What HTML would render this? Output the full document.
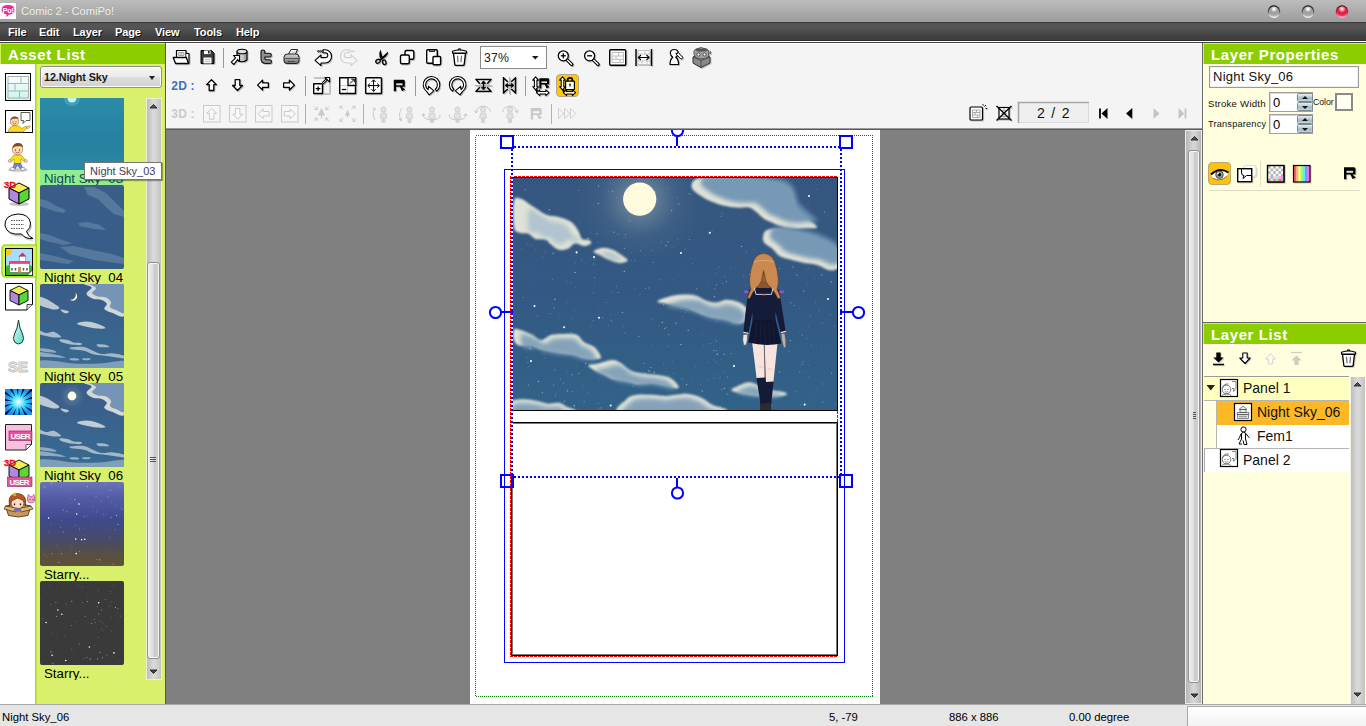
<!DOCTYPE html>
<html lang="en">
<head>
<meta charset="utf-8">
<title>Comic 2 - ComiPo!</title>
<style>
*{box-sizing:border-box;margin:0;padding:0}
html,body{width:1366px;height:726px;overflow:hidden;background:#f4f4f4;font-family:"Liberation Sans","DejaVu Sans",sans-serif;font-size:12px;color:#000}
.a{position:absolute}
#root{position:relative;width:1366px;height:726px;overflow:hidden;background:#f4f4f4}
#title{left:0;top:0;width:1366px;height:22px;background:linear-gradient(#bcbcbc 0,#b0b0b0 40%,#9b9b9b 100%)}
#title .txt{left:21px;top:5px;font-size:11.2px;color:#f4f2ec;text-shadow:0 0 1px #909090;letter-spacing:-.05px}
#menu{left:0;top:22px;width:1366px;height:19px;background:linear-gradient(#525252 0,#555 25%,#404040 80%,#3e3e3e 100%);border-top:1px solid #3c3c3c;border-bottom:1px solid #2c2c2c}
#menu span{position:absolute;top:3px;color:#fff;font-weight:bold;font-size:11px;letter-spacing:-.1px;text-shadow:1px 1px 0 #111}
#menuline{left:0;top:41px;width:1366px;height:2px;background:#fff;border-bottom:1px solid #444}
.ghead{border-top:1px solid #d2f05a;border-left:1px solid #d2f05a;background:#8ccd00;color:#fff;font-weight:bold;font-size:15px;height:21px;line-height:20px;padding-top:1px;letter-spacing:.6px}
/* left */
#left{left:0;top:43px;width:165px;height:661px;background:#d9f06c}
#lefthead{left:0;top:0;width:165px}
#iconcol{left:0;top:21px;width:35px;height:640px;background:#fff}
#lborder{left:165px;top:43px;width:1px;height:661px;background:#555}
.th{left:40px;width:84px;height:84px;border-radius:2px;overflow:hidden}
.th svg{display:block}
.lab{left:40px;width:84px;height:15px;overflow:hidden;font-size:13.3px;line-height:18px;padding-left:4px;white-space:nowrap;letter-spacing:0}
/* toolbar */
#tool{left:166px;top:43px;width:1036px;height:85px;background:#f4f4f4}
#toolline{left:166px;top:128px;width:1036px;height:2px;background:#5a5a5a;border-top:1px solid #9a9a9a}
/* canvas */
#canvas{left:166px;top:130px;width:1019px;height:574px;background:#808080}
#page{left:470px;top:130px;width:410px;height:574px;background:#fff}
#vscroll{left:1185px;top:130px;width:17px;height:574px;border:1px solid #ececec;border-right:0;background:linear-gradient(90deg,#b6b6b6,#d6d6d6 45%,#d2d2d2 60%,#b0b0b0);box-shadow:inset -1px 0 0 #ededed}
#rsep{left:1202px;top:43px;width:1px;height:661px;background:#6b6b6b}
/* right */
#right{left:1203px;top:43px;width:163px;height:661px;background:#ffffe0}
.sm{font-size:10.5px;color:#111;letter-spacing:.2px;white-space:nowrap}
.spin{width:44px;height:20px;border:1px solid #a0a0a0;background:#fff;box-shadow:inset 1px 1px 0 #d8d8d8}
.spin span{position:absolute;left:3px;top:1px;font-size:13px;line-height:17px}
.spin i{position:absolute;left:27px;width:16px;height:9px;border:1px solid #7a8a96;border-radius:1.5px;background:linear-gradient(#e8eef2,#b4c4cc 50%,#9cb0ba 52%,#c8d4da)}
.spin i.u{top:0}.spin i.d{top:9px}
.spin i:after{content:"";position:absolute;left:4px;top:2px;border:3px solid transparent}
.spin i.u:after{border-bottom:3.5px solid #111;border-top:0}
.spin i.d:after{border-top:3.5px solid #111;border-bottom:0;top:2.5px}
.tl{font-size:14px;line-height:17px;color:#111;white-space:nowrap}
/* status */
#status{left:0;top:704px;width:1366px;height:22px;background:#e6e6e6;border-top:1px solid #a8a8a8;font-size:11.3px}
#status span{position:absolute;top:6px}
</style>
</head>
<body>
<div id="root">
<div id="title" class="a"><svg class="a" style="left:0;top:0" width="1366" height="22" viewBox="0 0 1366 22">
<defs>
<radialGradient id="ballg" cx=".5" cy=".25" r=".75"><stop offset="0" stop-color="#fff"/><stop offset=".16" stop-color="#ececec"/><stop offset=".42" stop-color="#9e9e9e"/><stop offset=".75" stop-color="#a4a4a4"/><stop offset="1" stop-color="#c0c0c0"/></radialGradient>
<radialGradient id="ballr" cx=".5" cy=".25" r=".75"><stop offset="0" stop-color="#fff"/><stop offset=".2" stop-color="#f8a0b0"/><stop offset=".5" stop-color="#d81840"/><stop offset=".85" stop-color="#f03860"/><stop offset="1" stop-color="#f890a8"/></radialGradient>
<linearGradient id="rim" x1="0" y1="0" x2="0" y2="1"><stop offset="0" stop-color="#101010"/><stop offset=".5" stop-color="#5a5a5a"/><stop offset=".8" stop-color="#d0d0d0"/><stop offset="1" stop-color="#ffffff"/></linearGradient>
<linearGradient id="rimr" x1="0" y1="0" x2="0" y2="1"><stop offset="0" stop-color="#400010"/><stop offset=".55" stop-color="#c02040"/><stop offset="1" stop-color="#f8c0c8"/></linearGradient>
</defs>
<rect x="0" y="3" width="16" height="16" fill="#fff"/>
<path d="M8,5 q6.500,0 6.500,4.800 q0,4.700 -5.500,4.800 q-1,2 -3.500,2.400 q1.200,-1.200 1,-2.700 q-5,-.8 -5,-4.500 q0,-4.800 6.500,-4.800Z" fill="#ee2a9a"/>
<text x="2.600" y="12.800" font-family="Liberation Sans,sans-serif" font-weight="bold" font-size="7.500" fill="#fff" letter-spacing="-.4">Po!</text>
<circle cx="1274" cy="11.600" r="6.300" fill="url(#rim)"/><circle cx="1274" cy="11.600" r="5.100" fill="url(#ballg)"/>
<circle cx="1308" cy="11.600" r="6.300" fill="url(#rim)"/><circle cx="1308" cy="11.600" r="5.100" fill="url(#ballg)"/>
<circle cx="1342" cy="11.600" r="6.300" fill="url(#rimr)"/><circle cx="1342" cy="11.600" r="5.300" fill="url(#ballr)"/>
</svg>
<span class="a txt">Comic 2 - ComiPo!</span></div>
<div id="menu" class="a"><span style="left:8px">File</span><span style="left:39px">Edit</span><span style="left:73px">Layer</span><span style="left:115px">Page</span><span style="left:155px">View</span><span style="left:194px">Tools</span><span style="left:236px">Help</span></div>
<div id="menuline" class="a"></div>

<div id="left" class="a">
  <div id="lefthead" class="a ghead"><span style="padding-left:7px">Asset List</span></div>
  <div id="iconcol" class="a"></div>
<svg width="0" height="0" style="position:absolute"><defs>
<filter id="tb" x="-10%" y="-10%" width="120%" height="120%"><feGaussianBlur stdDeviation=".55"/></filter>
<filter id="tb2" x="-50%" y="-50%" width="200%" height="200%"><feGaussianBlur stdDeviation="2.5"/></filter>
<linearGradient id="tsky" x1="0" y1="0" x2="0" y2="1"><stop offset="0" stop-color="#36588a"/><stop offset="1" stop-color="#35698f"/></linearGradient>
<g id="tclouds" filter="url(#tb)"><path d="M44.0,-1.0C38.4,-0.3 51.2,1.6 51.6,3.4C52.0,5.2 46.3,7.9 46.5,9.8C46.7,11.7 50.4,13.8 52.9,14.8C55.4,15.8 59.4,15.1 61.7,16.0C64.0,16.9 66.4,18.5 66.8,20.0C67.2,21.5 63.4,23.5 64.3,25.0C65.2,26.5 68.5,27.9 71.9,28.8C75.4,29.8 82.8,35.7 85.0,30.7C87.2,25.7 91.8,4.3 85.0,-1.0C78.2,-6.3 49.6,-1.7 44.0,-1.0Z" fill="#d0d8d8"/><path d="M50.0,-1.0C45.2,-0.2 55.7,2.3 56.0,4.0C56.3,5.7 51.7,7.6 52.0,9.0C52.3,10.4 55.7,11.8 58.0,12.5C60.3,13.2 63.8,12.6 66.0,13.5C68.2,14.4 70.3,16.4 71.0,18.0C71.7,19.6 69.2,21.7 70.0,23.0C70.8,24.3 73.5,25.2 76.0,26.0C78.5,26.8 83.5,32.0 85.0,27.5C86.5,23.0 90.8,3.8 85.0,-1.0C79.2,-5.8 54.8,-1.8 50.0,-1.0Z" fill="#7594b6"/><path d="M-1.0,12.9C0.2,12.0 3.8,13.9 6.0,14.8C8.2,15.8 10.1,17.1 12.3,18.6C14.5,20.1 18.9,22.5 19.3,23.7C19.7,24.9 16.6,25.5 14.8,25.6C13.0,25.7 11.1,25.2 8.5,24.3C5.9,23.4 0.6,22.4 -1.0,20.5C-2.6,18.6 -2.2,13.8 -1.0,12.9Z" fill="#b9c8d2"/><path d="M21.2,25.6C22.4,25.6 28.0,26.9 28.8,27.5C29.6,28.1 27.4,29.4 26.2,29.4C25.0,29.4 22.6,28.1 21.8,27.5C21.0,26.9 20.0,25.6 21.2,25.6Z" fill="#b9c8d2"/><path d="M37.6,38.9C38.9,38.4 43.3,37.5 46.5,37.6C49.7,37.7 53.5,38.4 56.7,39.5C59.9,40.6 65.5,43.1 65.5,44.0C65.5,44.9 59.9,44.8 56.7,44.6C53.5,44.4 49.5,43.3 46.5,42.7C43.5,42.1 40.4,41.4 38.9,40.8C37.4,40.2 36.3,39.4 37.6,38.9Z" fill="#c0cdd4"/><path d="M-1.0,46.5C0.2,46.3 3.6,48.8 6.0,49.0C8.4,49.2 11.1,47.1 13.6,47.8C16.1,48.4 21.0,51.9 21.2,52.9C21.4,53.9 17.1,53.6 14.8,53.5C12.5,53.4 9.8,52.7 7.2,52.2C4.6,51.7 0.4,51.2 -1.0,50.3C-2.4,49.3 -2.2,46.7 -1.0,46.5Z" fill="#a9bccb"/><path d="M19.9,55.4C20.9,55.1 25.2,55.5 27.5,56.0C29.8,56.5 31.5,58.1 33.8,58.6C36.1,59.1 40.3,58.8 41.4,59.2C42.5,59.6 41.9,60.9 40.2,61.1C38.5,61.3 34.5,61.0 31.3,60.5C28.1,60.0 23.1,58.8 21.2,57.9C19.3,57.0 18.8,55.7 19.9,55.4Z" fill="#a9bccb"/><path d="M30.0,63.6C31.9,63.2 40.2,62.5 44.0,63.0C47.8,63.5 49.9,65.6 52.9,66.8C55.9,68.0 58.5,69.6 61.7,70.0C64.9,70.4 68.0,69.0 71.9,69.3C75.8,69.6 82.8,71.1 85.0,71.9C87.2,72.8 88.0,74.4 85.0,74.4C82.0,74.4 72.0,72.5 66.8,71.9C61.6,71.3 57.9,71.4 54.1,70.6C50.3,69.8 47.6,67.6 44.0,66.8C40.4,66.0 34.9,66.0 32.6,65.5C30.3,65.0 28.1,64.0 30.0,63.6Z" fill="#a2b8c8"/><path d="M56.7,60.5C57.6,60.1 62.2,60.1 64.3,60.5C66.4,60.9 70.1,62.6 69.3,63.0C68.5,63.4 61.3,63.4 59.2,63.0C57.1,62.6 55.9,60.9 56.7,60.5Z" fill="#a2b8c8"/><path d="M-1.0,64.3C0.6,64.0 5.7,64.4 8.5,64.9C11.3,65.4 15.3,66.8 16.1,67.4C17.0,68.0 16.4,68.8 13.6,68.7C10.8,68.6 1.4,67.5 -1.0,66.8C-3.4,66.1 -2.6,64.6 -1.0,64.3Z" fill="#8faabf"/><path d="M-1.0,68.0C0.6,67.6 4.8,68.6 8.5,69.3C12.2,70.0 18.4,71.2 21.2,71.9C23.9,72.7 27.1,73.6 25.0,73.8C22.9,74.0 12.8,73.4 8.5,73.1C4.2,72.8 0.6,72.8 -1.0,71.9C-2.6,71.1 -2.6,68.4 -1.0,68.0Z" fill="#8faabf"/><path d="M-1.0,76.9C1.6,75.6 9.0,76.5 14.8,76.9C20.6,77.3 26.4,79.1 33.8,79.5C41.2,79.9 50.7,79.9 59.2,79.5C67.7,79.1 80.7,76.0 85.0,76.9C89.3,77.8 99.3,83.7 85.0,85.0C70.7,86.3 13.3,86.3 -1.0,85.0C-15.3,83.7 -3.6,78.2 -1.0,76.9Z" fill="#7f9eb8"/><path d="M30.0,74.4C31.1,74.1 36.1,74.1 37.6,74.4C39.1,74.7 39.9,76.0 38.9,76.3C37.9,76.6 32.8,76.6 31.3,76.3C29.8,76.0 28.9,74.7 30.0,74.4Z" fill="#9ab2c4"/><path d="M42.7,74.4C43.9,74.2 49.2,74.2 50.3,74.4C51.3,74.7 50.2,75.7 49.0,75.9C47.8,76.2 44.3,76.2 43.3,75.9C42.2,75.7 41.5,74.7 42.7,74.4Z" fill="#9ab2c4"/></g>
</defs></svg>
<div class="a" id="ddl" style="left:40px;top:23px;width:122px;height:22px;border:1px solid #8e8e8e;border-radius:3px;background:linear-gradient(#f6f6f6,#ececec 45%,#dcdcdc 55%,#d2d2d2);box-shadow:inset 0 0 0 1px #fbfbfb"><span class="a" style="left:3px;top:4px;font-size:10.8px;font-weight:bold;color:#1a1a1a;letter-spacing:-.1px">12.Night Sky</span><span class="a" style="left:108px;top:9px;width:0;height:0;border:3px solid transparent;border-top:4px solid #222;border-bottom:0"></span></div>
<!-- thumbs: panel-local y = page y - 43 -->
<div class="a th" style="top:55px;height:72px;border-radius:0 0 2px 2px;background:linear-gradient(#2a8caa,#26809f 60%,#2a88a6)"><svg width="84" height="72"><circle cx="32" cy="0" r="4.5" fill="#d8fbf4"/><circle cx="32" cy="0" r="8" fill="#8fe0e0" opacity=".25"/></svg></div>
<div class="a lab" style="top:127px;background:#90ee90;color:#0c4858">Night Sky_03</div>
<div class="a th" style="top:142px;background:linear-gradient(#3b5d88,#355e88)"><svg width="84" height="84"><g filter="url(#tb)" fill="#56789d"><path d="M44,2 l10,0 l12,6 l10,10 l8,8 l0,6 l-10,-3 l-8,-7 l-8,-8 l-10,-4Z"/><path d="M0,14 l8,2 l8,5 l10,4 l-2,3 l-10,-2 l-14,-5Z"/><path d="M38,38 l10,-1 l12,3 l6,5 l-12,-1 l-14,-3Z"/><path d="M0,48 l10,2 l12,5 l10,3 l-8,2 l-14,-3 l-10,-3Z"/><path d="M20,62 l14,-1 l18,4 l20,4 l12,4 l0,6 l-30,-4 l-24,-6Z"/><path d="M0,68 l14,3 l20,5 l-6,3 l-28,-4Z"/></g></svg></div>
<div class="a lab" style="top:226px">Night Sky_04</div>
<div class="a th" style="top:241px;background:linear-gradient(#3a5c88,#386a92)"><svg width="84" height="84"><use href="#tclouds"/><path d="M35.600,9 a4.400,4.400 0 1 1 -5.800,6.800 a5.400,5.400 0 0 0 5.800,-6.800Z" fill="#f8f2cc"/></svg></div>
<div class="a lab" style="top:325px">Night Sky_05</div>
<div class="a th" style="top:340px;background:linear-gradient(#3a5c88,#386a92)"><svg width="84" height="84"><circle cx="32" cy="13" r="9" fill="#8aa2b8" opacity=".3" filter="url(#tb2)"/><use href="#tclouds"/><circle cx="32" cy="13" r="4.4" fill="#fffbe2"/></svg></div>
<div class="a lab" style="top:424px">Night Sky_06</div>
<div class="a th" style="top:439px;background:linear-gradient(#6a74b8 0,#545ca6 18%,#3f4a8c 45%,#474a6a 68%,#57503e 88%,#5e5238)"><svg width="84" height="84"><circle cx="20.5" cy="45.6" r="0.4" fill="#e8ecff" opacity="0.85"/><circle cx="39.9" cy="48.6" r="0.3" fill="#e8ecff" opacity="0.85"/><circle cx="39.5" cy="46.2" r="0.35" fill="#e8ecff" opacity="0.90"/><circle cx="39.6" cy="69.6" r="0.5" fill="#e8ecff" opacity="0.57"/><circle cx="71.6" cy="20.0" r="0.35" fill="#e8ecff" opacity="0.83"/><circle cx="43.9" cy="61.8" r="0.3" fill="#e8ecff" opacity="0.44"/><circle cx="79.5" cy="4.5" r="0.3" fill="#e8ecff" opacity="0.80"/><circle cx="23.1" cy="49.8" r="0.5" fill="#e8ecff" opacity="0.74"/><circle cx="76.5" cy="33.4" r="0.5" fill="#e8ecff" opacity="0.88"/><circle cx="12.0" cy="31.0" r="0.3" fill="#e8ecff" opacity="0.42"/><circle cx="18.8" cy="80.2" r="0.5" fill="#e8ecff" opacity="0.78"/><circle cx="71.1" cy="35.5" r="0.5" fill="#e8ecff" opacity="0.67"/><circle cx="44.8" cy="34.4" r="0.35" fill="#e8ecff" opacity="0.85"/><circle cx="56.9" cy="77.2" r="0.4" fill="#e8ecff" opacity="0.90"/><circle cx="56.0" cy="14.4" r="0.4" fill="#e8ecff" opacity="0.88"/><circle cx="75.2" cy="47.7" r="0.35" fill="#e8ecff" opacity="0.70"/><circle cx="82.0" cy="22.9" r="0.3" fill="#e8ecff" opacity="0.38"/><circle cx="71.0" cy="82.2" r="0.3" fill="#e8ecff" opacity="0.54"/><circle cx="6.5" cy="74.6" r="0.3" fill="#e8ecff" opacity="0.51"/><circle cx="64.0" cy="72.6" r="0.3" fill="#e8ecff" opacity="0.68"/><circle cx="63.5" cy="32.0" r="0.4" fill="#e8ecff" opacity="0.65"/><circle cx="76.6" cy="23.9" r="0.35" fill="#e8ecff" opacity="0.90"/><circle cx="26.4" cy="7.3" r="0.3" fill="#e8ecff" opacity="0.87"/><circle cx="80.7" cy="24.9" r="0.4" fill="#e8ecff" opacity="0.44"/><circle cx="4.5" cy="72.2" r="0.4" fill="#e8ecff" opacity="0.55"/><circle cx="12.3" cy="71.7" r="0.5" fill="#e8ecff" opacity="0.60"/><circle cx="43.6" cy="53.8" r="0.3" fill="#e8ecff" opacity="0.69"/><circle cx="78.1" cy="42.6" r="0.5" fill="#e8ecff" opacity="0.70"/><circle cx="59.7" cy="77.8" r="0.5" fill="#e8ecff" opacity="0.89"/><circle cx="43.7" cy="46.0" r="0.3" fill="#e8ecff" opacity="0.78"/><circle cx="82.0" cy="26.8" r="0.5" fill="#e8ecff" opacity="0.69"/><circle cx="52.8" cy="5.9" r="0.4" fill="#e8ecff" opacity="0.61"/><circle cx="56.7" cy="29.9" r="0.4" fill="#e8ecff" opacity="0.76"/><circle cx="2.8" cy="6.0" r="0.3" fill="#e8ecff" opacity="0.88"/><circle cx="21.6" cy="38.4" r="0.4" fill="#e8ecff" opacity="0.45"/><circle cx="16.2" cy="63.2" r="0.4" fill="#e8ecff" opacity="0.52"/><circle cx="31.9" cy="64.3" r="0.3" fill="#e8ecff" opacity="0.88"/><circle cx="57.1" cy="11.8" r="0.35" fill="#e8ecff" opacity="0.71"/><circle cx="23.1" cy="27.9" r="0.5" fill="#e8ecff" opacity="0.71"/><circle cx="9.0" cy="50.3" r="0.4" fill="#e8ecff" opacity="0.72"/><circle cx="19.4" cy="67.4" r="0.35" fill="#e8ecff" opacity="0.39"/><circle cx="61.8" cy="18.9" r="0.5" fill="#e8ecff" opacity="0.50"/><circle cx="65.5" cy="3.8" r="0.35" fill="#e8ecff" opacity="0.52"/><circle cx="69.6" cy="48.1" r="0.4" fill="#e8ecff" opacity="0.54"/><circle cx="68.9" cy="8.0" r="0.4" fill="#e8ecff" opacity="0.67"/><circle cx="35.5" cy="43.5" r="0.4" fill="#e8ecff" opacity="0.61"/><circle cx="53.0" cy="24.8" r="0.5" fill="#e8ecff" opacity="0.37"/><circle cx="34.9" cy="17.4" r="0.5" fill="#e8ecff" opacity="0.87"/><circle cx="73.2" cy="81.9" r="0.5" fill="#e8ecff" opacity="0.66"/><circle cx="81.8" cy="59.8" r="0.3" fill="#e8ecff" opacity="0.76"/><circle cx="69.6" cy="55.4" r="0.4" fill="#e8ecff" opacity="0.65"/><circle cx="74.0" cy="71.6" r="0.4" fill="#e8ecff" opacity="0.42"/><circle cx="21.1" cy="3.9" r="0.35" fill="#e8ecff" opacity="0.84"/><circle cx="74.8" cy="48.3" r="0.3" fill="#e8ecff" opacity="0.61"/><circle cx="10.9" cy="42.3" r="0.35" fill="#e8ecff" opacity="0.71"/><circle cx="44.0" cy="34.9" r="0.3" fill="#e8ecff" opacity="0.54"/><circle cx="21.7" cy="71.7" r="0.5" fill="#e8ecff" opacity="0.80"/><circle cx="6.0" cy="19.1" r="0.3" fill="#e8ecff" opacity="0.64"/><circle cx="68.0" cy="15.0" r="0.4" fill="#e8ecff" opacity="0.86"/><circle cx="67.1" cy="68.5" r="0.3" fill="#e8ecff" opacity="0.62"/><circle cx="47.8" cy="33.8" r="0.4" fill="#e8ecff" opacity="0.49"/><circle cx="51.7" cy="43.6" r="0.3" fill="#e8ecff" opacity="0.61"/><circle cx="64.7" cy="1.1" r="0.3" fill="#e8ecff" opacity="0.78"/><circle cx="4.8" cy="5.1" r="0.5" fill="#e8ecff" opacity="0.89"/><circle cx="71.1" cy="8.1" r="0.5" fill="#e8ecff" opacity="0.52"/><circle cx="26.8" cy="29.8" r="0.5" fill="#e8ecff" opacity="0.67"/><circle cx="30.6" cy="16.7" r="0.4" fill="#e8ecff" opacity="0.59"/><circle cx="11.5" cy="1.3" r="0.5" fill="#e8ecff" opacity="0.79"/><circle cx="47.5" cy="4.5" r="0.5" fill="#e8ecff" opacity="0.68"/><circle cx="65.2" cy="32.2" r="0.3" fill="#e8ecff" opacity="0.69"/><circle cx="36.7" cy="32.0" r=".8" fill="#fff"/><circle cx="41.7" cy="57.8" r=".8" fill="#fff"/><circle cx="35.8" cy="57.1" r=".8" fill="#fff"/><circle cx="38.9" cy="22.1" r=".8" fill="#fff"/><circle cx="44.8" cy="57.2" r=".8" fill="#fff"/><circle cx="8.6" cy="36.1" r=".8" fill="#fff"/><circle cx="36.2" cy="71.6" r=".8" fill="#fff"/></svg></div>
<div class="a lab" style="top:523px">Starry...</div>
<div class="a th" style="top:538px;background:#3a3a3a"><svg width="84" height="84"><circle cx="77.8" cy="31.7" r="0.4" fill="#e0e0e0" opacity="0.42"/><circle cx="57.6" cy="78.0" r="0.5" fill="#e0e0e0" opacity="0.72"/><circle cx="61.2" cy="47.2" r="0.3" fill="#e0e0e0" opacity="0.80"/><circle cx="59.8" cy="39.8" r="0.35" fill="#e0e0e0" opacity="0.78"/><circle cx="4.6" cy="8.5" r="0.3" fill="#e0e0e0" opacity="0.71"/><circle cx="31.8" cy="68.2" r="0.4" fill="#e0e0e0" opacity="0.81"/><circle cx="10.9" cy="70.2" r="0.5" fill="#e0e0e0" opacity="0.81"/><circle cx="79.1" cy="48.5" r="0.3" fill="#e0e0e0" opacity="0.37"/><circle cx="63.9" cy="42.9" r="0.35" fill="#e0e0e0" opacity="0.41"/><circle cx="62.4" cy="77.6" r="0.3" fill="#e0e0e0" opacity="0.65"/><circle cx="72.3" cy="15.8" r="0.3" fill="#e0e0e0" opacity="0.48"/><circle cx="15.7" cy="21.5" r="0.5" fill="#e0e0e0" opacity="0.49"/><circle cx="50.2" cy="78.0" r="0.5" fill="#e0e0e0" opacity="0.88"/><circle cx="31.8" cy="20.3" r="0.5" fill="#e0e0e0" opacity="0.81"/><circle cx="80.3" cy="35.1" r="0.5" fill="#e0e0e0" opacity="0.44"/><circle cx="33.9" cy="73.8" r="0.35" fill="#e0e0e0" opacity="0.40"/><circle cx="62.3" cy="76.2" r="0.5" fill="#e0e0e0" opacity="0.67"/><circle cx="71.4" cy="12.2" r="0.35" fill="#e0e0e0" opacity="0.43"/><circle cx="43.3" cy="77.7" r="0.4" fill="#e0e0e0" opacity="0.72"/><circle cx="71.1" cy="49.8" r="0.4" fill="#e0e0e0" opacity="0.84"/><circle cx="26.2" cy="23.0" r="0.5" fill="#e0e0e0" opacity="0.46"/><circle cx="47.7" cy="20.6" r="0.5" fill="#e0e0e0" opacity="0.78"/><circle cx="12.8" cy="82.3" r="0.5" fill="#e0e0e0" opacity="0.74"/><circle cx="17.9" cy="48.6" r="0.3" fill="#e0e0e0" opacity="0.61"/><circle cx="60.1" cy="71.2" r="0.5" fill="#e0e0e0" opacity="0.78"/><circle cx="73.3" cy="4.8" r="0.35" fill="#e0e0e0" opacity="0.84"/><circle cx="54.2" cy="64.7" r="0.3" fill="#e0e0e0" opacity="0.88"/><circle cx="71.0" cy="20.9" r="0.35" fill="#e0e0e0" opacity="0.78"/><circle cx="12.3" cy="52.0" r="0.3" fill="#e0e0e0" opacity="0.84"/><circle cx="21.9" cy="71.9" r="0.4" fill="#e0e0e0" opacity="0.45"/><circle cx="8.5" cy="66.5" r="0.3" fill="#e0e0e0" opacity="0.40"/><circle cx="69.4" cy="24.9" r="0.4" fill="#e0e0e0" opacity="0.60"/><circle cx="61.2" cy="28.6" r="0.3" fill="#e0e0e0" opacity="0.53"/><circle cx="36.8" cy="40.8" r="0.35" fill="#e0e0e0" opacity="0.70"/><circle cx="61.9" cy="41.2" r="0.35" fill="#e0e0e0" opacity="0.65"/><circle cx="10.8" cy="23.5" r="0.5" fill="#e0e0e0" opacity="0.41"/><circle cx="73.7" cy="75.5" r="0.3" fill="#e0e0e0" opacity="0.64"/><circle cx="58.5" cy="56.6" r="0.4" fill="#e0e0e0" opacity="0.77"/><circle cx="25.2" cy="56.4" r="0.4" fill="#e0e0e0" opacity="0.41"/><circle cx="78.4" cy="28.8" r="0.3" fill="#e0e0e0" opacity="0.72"/><circle cx="42.7" cy="5.9" r="0.4" fill="#e0e0e0" opacity="0.72"/><circle cx="47.4" cy="15.9" r="0.35" fill="#e0e0e0" opacity="0.45"/><circle cx="74.0" cy="54.7" r="0.3" fill="#e0e0e0" opacity="0.41"/><circle cx="46.9" cy="76.5" r="0.5" fill="#e0e0e0" opacity="0.66"/><circle cx="54.1" cy="38.5" r="0.4" fill="#e0e0e0" opacity="0.78"/><circle cx="58.8" cy="9.8" r="0.35" fill="#e0e0e0" opacity="0.76"/><circle cx="45.5" cy="61.7" r="0.4" fill="#e0e0e0" opacity="0.40"/><circle cx="23.2" cy="5.4" r="0.35" fill="#e0e0e0" opacity="0.37"/><circle cx="42.4" cy="21.3" r="0.4" fill="#e0e0e0" opacity="0.83"/><circle cx="78.5" cy="37.8" r="0.3" fill="#e0e0e0" opacity="0.54"/><circle cx="70.4" cy="10.2" r="0.4" fill="#e0e0e0" opacity="0.67"/><circle cx="56.9" cy="47.3" r="0.3" fill="#e0e0e0" opacity="0.45"/><circle cx="16.5" cy="35.2" r="0.5" fill="#e0e0e0" opacity="0.80"/><circle cx="62.4" cy="49.5" r="0.35" fill="#e0e0e0" opacity="0.82"/><circle cx="66.5" cy="45.7" r="0.35" fill="#e0e0e0" opacity="0.66"/><circle cx="17.6" cy="21.5" r="0.4" fill="#e0e0e0" opacity="0.37"/><circle cx="66.9" cy="74.1" r="0.5" fill="#e0e0e0" opacity="0.52"/><circle cx="75.3" cy="26.4" r="0.5" fill="#e0e0e0" opacity="0.89"/><circle cx="57.3" cy="25.6" r="0.5" fill="#e0e0e0" opacity="0.37"/><circle cx="16.6" cy="53.0" r="0.3" fill="#e0e0e0" opacity="0.77"/><circle cx="55.3" cy="41.3" r="0.5" fill="#e0e0e0" opacity="0.46"/><circle cx="65.1" cy="18.4" r="0.5" fill="#e0e0e0" opacity="0.41"/><circle cx="24.2" cy="54.9" r="0.35" fill="#e0e0e0" opacity="0.42"/><circle cx="66.0" cy="52.1" r="0.3" fill="#e0e0e0" opacity="0.36"/><circle cx="51.7" cy="42.5" r="0.5" fill="#e0e0e0" opacity="0.65"/><circle cx="77.2" cy="27.5" r="0.4" fill="#e0e0e0" opacity="0.73"/><circle cx="12.0" cy="71.4" r="0.3" fill="#e0e0e0" opacity="0.74"/><circle cx="61.7" cy="29.2" r="0.35" fill="#e0e0e0" opacity="0.86"/><circle cx="71.6" cy="36.8" r="0.35" fill="#e0e0e0" opacity="0.62"/><circle cx="9.9" cy="4.5" r="0.3" fill="#e0e0e0" opacity="0.81"/><circle cx="58.9" cy="33.1" r="0.5" fill="#e0e0e0" opacity="0.73"/><circle cx="45.1" cy="35.6" r="0.5" fill="#e0e0e0" opacity="0.52"/><circle cx="39.1" cy="63.1" r="0.5" fill="#e0e0e0" opacity="0.59"/><circle cx="38.3" cy="4.1" r="0.4" fill="#e0e0e0" opacity="0.55"/><circle cx="31.4" cy="44.4" r="0.5" fill="#e0e0e0" opacity="0.47"/><circle cx="1.2" cy="18.1" r="0.4" fill="#e0e0e0" opacity="0.43"/><circle cx="38.7" cy="17.0" r="0.35" fill="#e0e0e0" opacity="0.36"/><circle cx="48.9" cy="42.3" r="0.3" fill="#e0e0e0" opacity="0.43"/><circle cx="50.9" cy="37.3" r="0.35" fill="#e0e0e0" opacity="0.38"/><circle cx="2.8" cy="37.7" r="0.5" fill="#e0e0e0" opacity="0.37"/><circle cx="58.7" cy="21.7" r=".8" fill="#fff"/><circle cx="6.1" cy="41.5" r=".8" fill="#fff"/><circle cx="73.9" cy="71.9" r=".8" fill="#fff"/><circle cx="21.8" cy="33.3" r=".8" fill="#fff"/><circle cx="17.9" cy="29.0" r=".8" fill="#fff"/><circle cx="12.1" cy="74.2" r=".8" fill="#fff"/><circle cx="49.4" cy="66.0" r=".8" fill="#fff"/><circle cx="25.7" cy="79.5" r=".8" fill="#fff"/></svg></div>
<div class="a lab" style="top:622px">Starry...</div>
<!-- scrollbar -->
<div class="a" style="left:146px;top:55px;width:16px;height:582px;border:1px solid #ecf2da;background:linear-gradient(90deg,#bdbdbd,#dadada 45%,#d6d6d6 60%,#c2c2c2)">
 <svg class="a" style="left:2px;top:4px" width="9" height="6"><path d="M1,5 L4.500,1.500 L8,5Z" fill="#555" stroke="#222" stroke-width=".9"/></svg>
 <div class="a" style="left:0;top:163px;width:13px;height:397px;border:1px solid #8f8f8f;border-radius:3px;background:linear-gradient(90deg,#ececec,#e0e0e0 45%,#cbcbcb 55%,#d0d0d0);box-shadow:inset 0 0 0 1px #f6f6f6"></div>
 <svg class="a" style="left:3px;top:358px" width="6" height="7"><path d="M0,.5H6M0,2.5H6M0,4.5H6" stroke="#555" stroke-width="1"/></svg>
 <svg class="a" style="left:2px;top:570px" width="9" height="6"><path d="M1,1 L4.500,4.500 L8,1Z" fill="#444" stroke="#222" stroke-width=".9"/></svg>
</div>
<!-- tooltip -->
<div class="a" style="left:84px;top:119px;width:78px;height:18px;background:#fff;border:1px solid #767676;font-size:11px;color:#3c4060;padding:2px 0 0 5px;box-shadow:1px 1px 1px rgba(0,0,0,.35)">Night Sky_03</div>

<svg class="a" style="left:0;top:21px" width="37" height="640" viewBox="0 64 37 640">
<defs>
<linearGradient id="cy" x1="0" y1="0" x2="0" y2="1"><stop offset="0" stop-color="#fff"/><stop offset="1" stop-color="#c8f4ee"/></linearGradient>
<radialGradient id="burst"><stop offset="0" stop-color="#ffffff"/><stop offset=".25" stop-color="#90f4ff"/><stop offset=".6" stop-color="#30c8f8"/><stop offset="1" stop-color="#1c90f0"/></radialGradient>
<linearGradient id="drop" x1="0" y1="0" x2="1" y2="1"><stop offset="0" stop-color="#e0fffa"/><stop offset="1" stop-color="#58d8c8"/></linearGradient>
</defs>
<!-- selected tab -->
<path d="M36.5,245 H6 Q2,245 2,249 V273 Q2,277 6,277 H36.5Z" fill="#d9f06c" stroke="#a4dc20" stroke-width="1.600"/>
<rect x="35" y="64" width="1.5" height="181" fill="#a4dc20"/><rect x="35" y="277" width="1.5" height="427" fill="#a4dc20"/>
<!-- 1 panel layout -->
<rect x="5.5" y="73.5" width="25" height="27" fill="url(#cy)" stroke="#000"/>
<path d="M8,76.5H28.5V98H8Z M8,83.5H28.5 M8,91H28.5 M21,76.5V83.5 M15,83.5V91 M19.5,91V98" fill="none" stroke="#a8b0b0" stroke-width="1"/>
<!-- 2 char w/ speech -->
<rect x="5.500" y="110.500" width="27" height="22" fill="#fff" stroke="#000"/>
<path d="M21,112.500 h9 v8 h-4 l-3,3 l0.500,-3 h-2.500Z" fill="#fff" stroke="#333" stroke-width=".8"/>
<path d="M25,115v.1M27,115v.1M25,117.500v.1M27,117.500v.1" stroke="#777" stroke-width="1"/>
<path d="M8,132 q1,-6 7,-6.500 q5,0 7,3 l4,-2.500 l2,1 l-5,5Z" fill="#f8d820" stroke="#a08000" stroke-width=".5"/>
<circle cx="14.500" cy="121.500" r="4.200" fill="#fbd8b0" stroke="#805030" stroke-width=".5"/>
<path d="M10.300,120.500 q1,-4.500 5,-4 q3,.2 3.500,2.500 l-2,-.5 l-4,.2Z" fill="#7a4a20"/>
<path d="M13,121.500v.8M16,121.500v.8" stroke="#222" stroke-width=".9"/><path d="M13,123.500 q1.500,1.300 3,0" stroke="#a03020" stroke-width=".6" fill="none"/>
<path d="M26,128 l3,-2.500 l1.500,.5 l-2,2.500Z" fill="#fbd8b0" stroke="#805030" stroke-width=".4"/>
<!-- 3 standing char -->
<ellipse cx="18" cy="170" rx="10" ry="1.800" fill="#c8c8c8"/>
<path d="M14,155 l-4.500,5 l1.500,1.500 l3,-2.500 v5 h7 v-5 l3,2.500 l1.500,-1.500 l-4.500,-5Z" fill="#f8e020" stroke="#907000" stroke-width=".5"/>
<path d="M14.500,163.500 l-2,5 h3 l2,-3.500 l2.500,3.500 h3 l-2.500,-5Z" fill="#7088d0" stroke="#304080" stroke-width=".5"/>
<ellipse cx="12.500" cy="169" rx="2.600" ry="1.400" fill="#fff" stroke="#555" stroke-width=".5"/><ellipse cx="23" cy="169" rx="2.600" ry="1.400" fill="#fff" stroke="#555" stroke-width=".5"/>
<circle cx="9.800" cy="161" r="1.500" fill="#fbd8b0" stroke="#805030" stroke-width=".4"/><circle cx="25.800" cy="161" r="1.500" fill="#fbd8b0" stroke="#805030" stroke-width=".4"/>
<circle cx="17.500" cy="149.500" r="5.200" fill="#fbd8b0" stroke="#805030" stroke-width=".5"/>
<path d="M12.300,148.500 q.5,-5.500 6,-5.500 q4.500,.3 4.700,4 l-3,-1 l-5,.5Z" fill="#7a4a20"/>
<path d="M15.500,149.500v1M19.500,149.500v1" stroke="#222" stroke-width="1"/><path d="M15.500,152 q2,1.600 4,0" stroke="#a03020" stroke-width=".7" fill="none"/>
<!-- 4 3D cube -->
<ellipse cx="19" cy="204" rx="10" ry="2" fill="#c4c4c4"/>
<path d="M19,183 l10,5 l-10,5 l-10,-5Z" fill="#f0f050" stroke="#000" stroke-width="1"/>
<path d="M9,188 l10,5 v11 l-10,-5Z" fill="#b088e0" stroke="#000" stroke-width="1"/>
<path d="M29,188 l-10,5 v11 l10,-5Z" fill="#58d838" stroke="#000" stroke-width="1"/>
<text x="4" y="188" font-family="Liberation Sans,sans-serif" font-weight="bold" font-size="9.500" fill="#e81010" stroke="#e81010" stroke-width=".3">3D</text>
<!-- 5 speech bubble -->
<path d="M18,215 q11,0 12.500,9 q.5,5 -4,8.500 q1.500,5 6.500,7 q-8,.5 -11.500,-4.500 q-14,1.500 -16.500,-8 q-1,-11 13,-12Z" fill="#c8c8c8" transform="translate(1.200,1.200)"/>
<path d="M18,214 q11,0 12.500,9 q.5,5 -4,8.500 q1.500,5 6.500,7 q-8,.5 -11.500,-4.500 q-14,1.500 -16.500,-8 q-1,-11 13,-12Z" fill="#fff" stroke="#000" stroke-width="1"/>
<path d="M11,220.500h13M11,224.500h13M11,228.500h13" stroke="#555" stroke-width="1.200" stroke-dasharray="1.500 1"/>
<!-- 6 background -->
<rect x="5.500" y="248.500" width="27" height="27" fill="#a8dcf8" stroke="#000"/>
<path d="M6,249 h6.500 q0,6.500 -6.500,6.500Z" fill="#f8c820"/>
<path d="M6,266 q8,-3 13,-1 q8,-2 13,1 v9 h-26Z" fill="#38b828"/>
<path d="M22.500,252.500 l4,4 h-8Z" fill="#e02868"/><rect x="19.500" y="256.500" width="6" height="5" fill="#fff" stroke="#555" stroke-width=".4"/>
<rect x="9" y="261" width="21" height="2.500" fill="#f04080"/>
<rect x="9.500" y="263.500" width="20" height="9" fill="#fff" stroke="#444" stroke-width=".5"/>
<path d="M12,268v2.500M15.500,268v2.500M23.500,268v2.500M27,268v2.500" stroke="#555" stroke-width="1.500"/><rect x="18" y="267" width="3" height="5.500" fill="#c89860"/>
<path d="M27,275.500 l5.500,-5.500 v5.500Z" fill="#fff" stroke="#000" stroke-width=".6"/>
<!-- 7 cube page -->
<path d="M5.500,283.500 h27 v21 l-5.500,5.500 h-21.500Z" fill="#fff" stroke="#000"/>
<path d="M27,310 v-5.500 h5.500" fill="#ddd" stroke="#000" stroke-width=".7"/>
<path d="M19,286 l9,4.500 l-9,4.500 l-9,-4.500Z" fill="#f0f050" stroke="#000" stroke-width=".9"/>
<path d="M10,290.500 l9,4.500 v10 l-9,-4.500Z" fill="#b088e0" stroke="#000" stroke-width=".9"/>
<path d="M28,290.500 l-9,4.500 v10 l9,-4.500Z" fill="#58d838" stroke="#000" stroke-width=".9"/>
<!-- 8 drop -->
<path d="M18.500,320 q1,9 4,14 q2.500,5 -0.500,8.500 q-3.500,3 -7,0 q-3,-3.500 -.5,-8.500 q3,-5 4,-14Z" fill="url(#drop)" stroke="#1a3838" stroke-width="1"/>
<!-- 9 SE -->
<text x="8" y="372" font-family="Liberation Sans,sans-serif" font-weight="bold" font-size="15" fill="#f2f2f2" stroke="#c4c4c4" stroke-width="1">SE</text>
<!-- 10 burst -->
<rect x="5" y="389" width="27" height="26" fill="url(#burst)"/>
<clipPath id="bc"><rect x="5" y="389" width="27" height="26"/></clipPath><path clip-path="url(#bc)" d="M25.3,403.0 L44.4,403.7 L43.8,408.1Z M24.2,405.9 L41.1,414.8 L38.7,418.4Z M20.8,406.0 L33.4,423.3 L29.5,425.5Z M18.9,406.7 L22.6,427.7 L18.2,428.0Z M16.1,408.1 L11.1,426.9 L7.0,425.3Z M13.9,406.3 L1.0,421.2 L-2.0,418.0Z M12.6,403.8 L-5.6,411.7 L-6.9,407.5Z M13.3,401.2 L-7.4,400.3 L-6.8,395.9Z M13.5,398.6 L-4.1,389.2 L-1.7,385.6Z M15.5,396.8 L3.6,380.7 L7.5,378.5Z M18.1,396.1 L14.4,376.3 L18.8,376.0Z M20.3,397.4 L25.9,377.1 L30.0,378.7Z M22.6,398.2 L36.0,382.8 L39.0,386.0Z M23.7,400.4 L42.6,392.3 L43.9,396.5Z " fill="#031040"/>
<!-- 11 USER page -->
<path d="M5.500,424.500 h26 v20 l-5.500,5.500 h-20.500Z" fill="#f8c0e0" stroke="#222"/>
<path d="M26,450 v-5.500 h5.500Z" fill="#fff" stroke="#222" stroke-width=".7"/>
<rect x="9" y="431" width="23" height="9.500" fill="#e85098" stroke="#902058" stroke-width=".6"/>
<text x="10.500" y="439" font-family="Liberation Sans,sans-serif" font-weight="bold" font-size="8" fill="#fff" textLength="20">USER</text>
<!-- 12 3D USER -->
<path d="M19,460 l10,5 l-10,5 l-10,-5Z" fill="#f0f050" stroke="#000" stroke-width=".9"/>
<path d="M9,465 l10,5 v11 l-10,-5Z" fill="#b088e0" stroke="#000" stroke-width=".9"/>
<path d="M29,465 l-10,5 v11 l10,-5Z" fill="#58d838" stroke="#000" stroke-width=".9"/>
<text x="4" y="466" font-family="Liberation Sans,sans-serif" font-weight="bold" font-size="9.500" fill="#e81010" stroke="#e81010" stroke-width=".3">3D</text>
<rect x="7.500" y="477" width="24.500" height="9.500" fill="#e85098" stroke="#902058" stroke-width=".6"/>
<text x="9.500" y="485" font-family="Liberation Sans,sans-serif" font-weight="bold" font-size="8" fill="#fff" textLength="20">USER</text>
<!-- 13 girl in box -->
<path d="M5.500,506 l13,-2.500 l12.500,2.500 l-3,9.500 l-9.500,1.500 l-10,-1.500Z" fill="#c89858" stroke="#402808" stroke-width=".8"/>
<circle cx="17.500" cy="503" r="6.300" fill="#fbdcc0" stroke="#603010" stroke-width=".5"/>
<path d="M9.500,506 q-2.500,-12.500 8,-12.500 q10,.5 8,12.500 l-2,-5.500 l-6,-2.500 l-6,3Z" fill="#b85820" stroke="#502008" stroke-width=".6"/>
<path d="M14.500,503.500v1.800M20.500,503.500v1.800" stroke="#302010" stroke-width="1.400"/>
<path d="M11.500,495.500 l4,-2.500 l1,3Z" fill="#f8d020" stroke="#907000" stroke-width=".4"/>
<path d="M5.500,506 l-1.500,3 l11.500,3 l3,-3.500Z M31,506 l2,3 l-11.500,3 l-3,-3.500Z" fill="#e0b878" stroke="#402808" stroke-width=".7"/>
<path d="M13.500,509.500 q4,-2.500 8,0 l-1,2 h-6Z" fill="#7068c0"/>
<path d="M27.500,498 l.8,-3.500 l1.800,2.200 h2 l1.800,-2.200 l.8,3.500 q1,4.500 -3.600,5 q-4.600,-.5 -3.600,-5Z" fill="#f8a0d0" stroke="#903070" stroke-width=".6"/>
<path d="M30,499v1M33,499v1" stroke="#501030" stroke-width=".9"/>
</svg>

</div>

<div id="lborder" class="a"></div>
<div id="tool" class="a"></div>
<svg class="a" style="left:166px;top:43px" width="1036" height="85" viewBox="166 43 1036 85" font-family="Liberation Sans,sans-serif">
<defs><filter id="ds" x="-10%" y="-10%" width="130%" height="130%"><feDropShadow dx="1" dy="1" stdDeviation=".45" flood-color="#000" flood-opacity=".22"/></filter><linearGradient id="cyl" x1="0" y1="0" x2="1" y2="0"><stop offset="0" stop-color="#8c8c8c"/><stop offset=".5" stop-color="#d4d4d4"/><stop offset="1" stop-color="#8c8c8c"/></linearGradient><linearGradient id="prn" x1="0" y1="0" x2="0" y2="1"><stop offset="0" stop-color="#d8d8d8"/><stop offset="1" stop-color="#6c6c6c"/></linearGradient></defs>
<path d="M166,43.5H1202M166.5,43V128" stroke="#fff" stroke-width="1" fill="none"/>
<path d="M223.5,48V68" stroke="#9a9a9a" stroke-width="1"/>
<path d="M305.5,76V96" stroke="#9a9a9a" stroke-width="1"/>
<path d="M415.5,76V96" stroke="#9a9a9a" stroke-width="1"/>
<path d="M525.5,76V96" stroke="#9a9a9a" stroke-width="1"/>
<path d="M305.5,104V124" stroke="#b0b0b0" stroke-width="1"/>
<path d="M363.5,104V124" stroke="#b0b0b0" stroke-width="1"/>
<path d="M551.5,104V124" stroke="#b0b0b0" stroke-width="1"/>
<g filter="url(#ds)" stroke-linejoin="round">
<path d="M176.500,57 V50.500 H186 V57" fill="#fff" stroke="#000" stroke-width="1.200"/><path d="M178.500,52.500h5.500v3h-5.500Z M181,52.500v3" fill="#ddd" stroke="#888" stroke-width=".7"/><path d="M186,53.500 h3 v9.500 h-2" fill="#eee" stroke="#000" stroke-width="1.100"/><path d="M173.200,57.500 H186.300 L188.600,63.500 H175.600Z" fill="#fff" stroke="#000" stroke-width="1.300"/>
<path d="M201,50.500 H211.500 L214,53 V63.500 H201Z" fill="#3a3a3a" stroke="#000" stroke-width="1"/><rect x="204" y="50.500" width="6.500" height="3.600" fill="#fff"/><rect x="208" y="51" width="1.600" height="2.500" fill="#222"/><rect x="203.500" y="57.500" width="8" height="6" fill="#f4f4f4"/><path d="M205,59.500h5M205,61.500h5" stroke="#aaa" stroke-width=".7"/>
<path d="M237,51.500 V60 Q242,63.500 247,60 V51.500" fill="url(#cyl)" stroke="#000" stroke-width="1.100"/><ellipse cx="242" cy="51.500" rx="5" ry="2.300" fill="#e0e0e0" stroke="#000" stroke-width="1.100"/><path d="M233.500,55.500 H239.500 V61.500 L237.600,59.600 L233.800,64.500 L231.300,62.200 L235.600,57.800Z" fill="#fff" stroke="#000" stroke-width="1.100"/>
<path d="M261,51.500 Q261,50 262.800,50 Q264.800,50 264.800,51.800 V53.300 H269.500 Q271.300,53.300 271.300,55.200 Q271.300,57 269.500,57 H264.800 V58.300 Q264.800,59.800 266.500,59.800 H269.600 Q271.500,59.800 271.500,61.700 Q271.500,63.500 269.600,63.500 H266 Q261,63.500 261,58.500Z" fill="#8e8e8e" stroke="#111" stroke-width="1.100"/>
<path d="M288.500,54 L291,49.500 H297.500 L295.500,54" fill="#fff" stroke="#222" stroke-width="1"/><path d="M291.500,52h4" stroke="#888" stroke-width=".6"/><path d="M284,57 Q284,54 288,54 H296 Q299,54 299,57 V61 Q299,63.500 296,63.500 H287 Q284,63.500 284,61Z" fill="url(#prn)" stroke="#222" stroke-width="1"/><path d="M285,58.500H298" stroke="#444" stroke-width=".8"/><path d="M288,61.500h7" stroke="#222" stroke-width="1" stroke-dasharray="1.200 1"/>
<g transform="translate(315,0)"><path d="M8,49.800 H10.200 A6.300,6.600 0 0 1 10.200,63 H6 V65.600 L0,60.300 L6,55 V57.600 H10.200 A2.600,2.400 0 0 0 10.200,52.800 H8Z" fill="#fff" stroke="#000" stroke-width="1.100"/><circle cx="3.300" cy="51.300" r=".8" fill="#fff" stroke="#000" stroke-width=".8"/><circle cx="5.300" cy="51.300" r=".8" fill="#fff" stroke="#000" stroke-width=".8"/><circle cx="7.200" cy="51.300" r=".8" fill="#fff" stroke="#000" stroke-width=".8"/></g>
</g><g>
<g transform="translate(672,0) scale(-1,1)"><g transform="translate(315,0)"><path d="M8,49.800 H10.200 A6.300,6.600 0 0 1 10.200,63 H6 V65.600 L0,60.300 L6,55 V57.600 H10.200 A2.600,2.400 0 0 0 10.200,52.800 H8Z" fill="#f6f6f6" stroke="#cfcfcf" stroke-width="1.100"/><circle cx="3.300" cy="51.300" r=".8" fill="#f6f6f6" stroke="#cfcfcf" stroke-width=".8"/><circle cx="5.300" cy="51.300" r=".8" fill="#f6f6f6" stroke="#cfcfcf" stroke-width=".8"/><circle cx="7.200" cy="51.300" r=".8" fill="#f6f6f6" stroke="#cfcfcf" stroke-width=".8"/></g></g>
</g><g filter="url(#ds)" stroke-linejoin="round">
<path d="M380.500,49.500 L383,59 L381.500,60.200 L379.500,57 Q378.500,53 380.500,49.500Z M388,51.500 Q388.500,54 386,56.500 L381,60.500 L379.800,59.300 Z" fill="#000"/><ellipse cx="378" cy="61.300" rx="2.300" ry="1.800" fill="none" stroke="#000" stroke-width="1.300" transform="rotate(-35 378 61.300)"/><ellipse cx="384.300" cy="62.300" rx="1.700" ry="2.400" fill="none" stroke="#000" stroke-width="1.300" transform="rotate(-15 384.300 62.300)"/>
<rect x="405" y="50.500" width="8.800" height="8.800" rx="1.500" fill="#fff" stroke="#000" stroke-width="1.400"/><rect x="400.500" y="55" width="8.800" height="8.800" rx="1.500" fill="#fff" stroke="#000" stroke-width="1.400"/>
<rect x="426.700" y="49.700" width="10.600" height="13.600" rx="1.200" fill="#fff" stroke="#000" stroke-width="1.400"/><path d="M429.500,49.700 v1.800 h5 v-1.800" fill="none" stroke="#000" stroke-width=".9"/><rect x="433" y="56.500" width="7.600" height="8.300" rx="1" fill="#fff" stroke="#000" stroke-width="1.400"/>
<g transform="translate(452,48.3) scale(1)"><path d="M1.500,5 H13.500 L12.200,16 Q12,17 11,17 H4 Q3,17 2.800,16Z" fill="#fff" stroke="#000" stroke-width="1.300"/><path d="M0.500,3 Q7.500,0.500 14.500,3 V4.800 H0.500Z" fill="#fff" stroke="#000" stroke-width="1.100"/><path d="M6,1.500 Q7.500,-0.500 9,1.500" fill="none" stroke="#000" stroke-width="1.100"/><path d="M5.500,7.500 L6,14 M9.500,7.500 L9,14" stroke="#777" stroke-width="1.300"/></g>
<path d="M566.9,59.6 L571.8,64.5" stroke="#000" stroke-width="3.400" stroke-linecap="round"/><path d="M567.3,60 L571.5999999999999,64.3" stroke="#fff" stroke-width="1.300" stroke-linecap="round"/><circle cx="563.3" cy="55.800" r="5" fill="#fff" stroke="#000" stroke-width="1.300"/><path d="M560.8,55.800h5" stroke="#000" stroke-width="1.300"/><path d="M563.3,53.300v5" stroke="#000" stroke-width="1.300"/>
<path d="M593.2,59.6 L598.1,64.5" stroke="#000" stroke-width="3.400" stroke-linecap="round"/><path d="M593.6,60 L597.9,64.3" stroke="#fff" stroke-width="1.300" stroke-linecap="round"/><circle cx="589.6" cy="55.800" r="5" fill="#fff" stroke="#000" stroke-width="1.300"/><path d="M587.1,55.800h5" stroke="#000" stroke-width="1.300"/>
<rect x="609.700" y="49.700" width="16" height="15.600" rx="1" fill="#fff" stroke="#000" stroke-width="1.400"/><path d="M612,52.500H623.500V62.500H612Z M612,56h11.500 M612,59.300h11.500 M618.500,52.500V56 M616,56v3.300 M620,59.300v3.200" fill="none" stroke="#bdbdbd" stroke-width="1"/>
<path d="M638,50.500H650V64.500H638Z M638,54h12 M638,57.500h12 M638,61h12 M645,50.500v3.500 M642,61v3.500 M647,61v3.500" fill="#fff" stroke="#c4c4c4" stroke-width="1"/><path d="M636,49V66 M651.500,49V66" stroke="#000" stroke-width="1.400"/><path d="M638.500,57.500H649 M641,55 l-2.700,2.500 l2.700,2.500 M646.500,55 l2.700,2.500 l-2.700,2.500" fill="none" stroke="#000" stroke-width="1.100"/>
<path d="M670,64.500 Q670,59.500 672.800,57.300 Q670.300,55.500 670.300,53 Q670.500,49.500 674.300,49.500 Q678,49.500 678.200,53 Q678.200,55.500 675.800,57.300 Q678.600,59.500 678.600,64.500Z" fill="#fff" stroke="#000" stroke-width="1.200"/><path d="M676.200,54.300 L678.200,52.500 L683,57.500 L681,59.300Z" fill="#fff" stroke="#000" stroke-width="1"/><path d="M676.200,54.300 l-1.200,-1.600 l2.800,0.300Z" fill="#000"/>
<path d="M693,57 L701,54 L710,57 V63 L701,67.500 L693,63Z" fill="#8a8a8a" stroke="#333" stroke-width="1"/><path d="M693,57 L701,60.500 L710,57 M701,60.500V67.500" stroke="#444" stroke-width=".8" fill="none"/><path d="M694,54 Q693,49 698,48.500 Q701,46.500 704,48.500 Q709.500,48.500 709,54 Q709,58.500 701.500,58.800 Q694.500,58.500 694,54Z" fill="#a0a0a0" stroke="#444" stroke-width=".8"/><path d="M695,50 q3,-3 6,-1 q4,-2 7,1 q-2,2 -6.500,1.500 q-4,.8 -6.500,-1.500Z" fill="#555"/><circle cx="698.500" cy="54.500" r="1.500" fill="#fff" stroke="#222" stroke-width=".7"/><circle cx="704.500" cy="54.500" r="1.500" fill="#fff" stroke="#222" stroke-width=".7"/><path d="M708.500,50v5M710.500,51v3" stroke="#666" stroke-width="1"/>
<path d="M211.5,79.7 L216.4,84.6 L213.8,84.6 L213.8,90.5 L209.2,90.5 L209.2,84.6 L206.6,84.6Z" fill="#fff" stroke="#000" stroke-width="1.300"/>
<path d="M237.5,90.5 L232.6,85.5 L235.2,85.5 L235.2,79.7 L239.8,79.7 L239.8,85.5 L242.4,85.5Z" fill="#fff" stroke="#000" stroke-width="1.300"/>
<path d="M257.6,85.1 L262.6,80.1 L262.6,82.8 L268.4,82.8 L268.4,87.3 L262.6,87.3 L262.6,90.0Z" fill="#fff" stroke="#000" stroke-width="1.300"/>
<path d="M294.4,85.1 L289.4,90.0 L289.4,87.3 L283.6,87.3 L283.6,82.8 L289.4,82.8 L289.4,80.1Z" fill="#fff" stroke="#000" stroke-width="1.300"/>
<path d="M313.500,77.500H329.500V93.500H322" fill="none" stroke="#c8c8c8" stroke-width="1"/><rect x="313.700" y="83.700" width="8.800" height="9.800" fill="#fff" stroke="#000" stroke-width="1.400"/><path d="M315.800,88.700h4.600M318.100,86.400v4.600" stroke="#000" stroke-width="1.300"/><path d="M322.800,83.400 L327.200,79" stroke="#000" stroke-width="2.600"/><path d="M322.800,83.400 L327.200,79" stroke="#fff" stroke-width=".9"/><path d="M325,77.500 h4.700 v4.700Z" fill="#fff" stroke="#000" stroke-width="1.100"/>
<path d="M347.500,85V93.500 M339.500,85.500H348" stroke="#c8c8c8" stroke-width="1" fill="none"/><path d="M348,77.700 H339.700 V93.500 H355.500 V85.500 H348Z" fill="#fff" stroke="none"/><path d="M347.500,85V93.500 M339.500,85.500H348" stroke="#c8c8c8" stroke-width="1" fill="none"/><path d="M348,77.700 H339.700 V93.500 H355.500 V85.500" fill="none" stroke="#000" stroke-width="1.400"/><rect x="348" y="77.700" width="7.800" height="7.800" fill="#fff" stroke="#000" stroke-width="1.300"/><path d="M350,83.500 l4,-4 M351.300,79.200h3v3" stroke="#000" stroke-width="1" fill="none"/><path d="M341.800,89.500h4.500" stroke="#000" stroke-width="1.300"/>
<rect x="365.700" y="77.700" width="15.800" height="15.800" rx=".8" fill="#fff" stroke="#000" stroke-width="1.500"/><path d="M373.600,80V91.200 M368,85.600H379.200 M371.600,82 l2,-2.200 l2,2.200 M371.600,89.200 l2,2.200 l2,-2.200 M370,83.600 l-2.200,2 l2.200,2 M377.200,83.600 l2.200,2 l-2.200,2" fill="none" stroke="#000" stroke-width="1"/>
<path transform="translate(393.8,79.8) scale(0.96)" d="M0,0 H10 Q11.5,0 11.5,1.500 V7.300 H8.400 L11.900,10.200 L8.500,11.900 L6.400,7.300 H2.400 V12 H0Z M2.400,3.500 V5.600 H9.100 V3.500Z" fill="#000" fill-rule="evenodd"/>
<g transform="translate(431.5,84.8)"><path d="M5.34,6.36 A8.3,8.3 0 1 0 -4.76,6.8 L-2.3,10.1 L2.4,6 L-2.9,1.6 L-3.38,4.83 A5.9,5.9 0 1 1 3.79,4.52 Z" fill="#fff" stroke="#000" stroke-width="1.100"/></g>
<g transform="translate(457.7,84.8) scale(-1,1)"><path d="M5.34,6.36 A8.3,8.3 0 1 0 -4.76,6.8 L-2.3,10.1 L2.4,6 L-2.9,1.6 L-3.38,4.83 A5.9,5.9 0 1 1 3.79,4.52 Z" fill="#fff" stroke="#000" stroke-width="1.100"/></g>
<path d="M475,85.500H492" stroke="#b4b4b4" stroke-width="1"/><path d="M476.300,91.400 L480,87.500 H487 L490.700,91.400Z" fill="#d4d4d4"/><path d="M475.300,79.400H491.700 M476.300,79.800 L479.800,83.700 M490.700,79.800 L487.200,83.700 M475.300,91.400H491.700 M476.300,91 L479.800,87.200 M490.700,91 L487.200,87.200" fill="none" stroke="#000" stroke-width="1.400"/><path d="M483.500,82V89" stroke="#000" stroke-width="1.300"/><path d="M481.200,83.600 L483.500,80.800 L485.800,83.600Z M481.200,87.300 L483.500,90 L485.800,87.300Z" fill="#000" stroke="#000" stroke-width=".6"/>
<path d="M509.500,77V94" stroke="#b4b4b4" stroke-width="1"/><path d="M515.500,78.300 L511.500,82 V89 L515.500,92.700Z" fill="#d4d4d4"/><path d="M503.500,77V93.700 M503.900,78.200 L507.800,81.800 M503.900,92.600 L507.800,89 M515.500,77V93.700 M515.100,78.200 L511.200,81.800 M515.100,92.600 L511.200,89" fill="none" stroke="#000" stroke-width="1.400"/><path d="M506,85.400H513" stroke="#000" stroke-width="1.300"/><path d="M507.700,83.100 L505,85.400 L507.700,87.700Z M511.300,83.100 L514,85.400 L511.300,87.700Z" fill="#000" stroke="#000" stroke-width=".6"/>
<path d="M534.4,87.9 L537.1,93.9 L538.6,92.2 L536.8000000000001,87.4Z" fill="#000"/><path d="M535.6,76.9 L538.5,80.1 L536.9,80.1 L536.9,86.7 L538.5,86.7 L535.6,89.9 L532.7,86.7 L534.4,86.7 L534.4,80.1 L532.7,80.1Z M536.6,92.7 L539.8,89.8 L539.8,91.5 L545.8,91.5 L545.8,89.8 L549.0,92.7 L545.8,95.6 L545.8,94.0 L539.8,94.0 L539.8,95.6Z" fill="#fff" stroke="#000" stroke-width="1.050"/>
<path transform="translate(539.3,78.2) scale(0.86)" d="M0,0 H10 Q11.5,0 11.5,1.500 V7.300 H8.400 L11.900,10.200 L8.500,11.900 L6.400,7.300 H2.400 V12 H0Z M2.400,3.500 V5.600 H9.100 V3.500Z" fill="#000" fill-rule="evenodd"/>
</g>
<rect x="556.500" y="74.500" width="22" height="22" rx="3.500" fill="#ffc800" stroke="#b0a890" stroke-width="1"/>
<g stroke-linejoin="round"><path d="M561.3,87.9 L563.9,93.9 L565.4,92.2 L563.7,87.4Z" fill="#000"/><path d="M562.5,76.9 L565.4,80.1 L563.8,80.1 L563.8,86.7 L565.4,86.7 L562.5,89.9 L559.6,86.7 L561.2,86.7 L561.2,80.1 L559.6,80.1Z M563.4,92.7 L566.6,89.8 L566.6,91.5 L572.4,91.5 L572.4,89.8 L575.6,92.7 L572.4,95.6 L572.4,94.0 L566.6,94.0 L566.6,95.6Z" fill="#fff" stroke="#000" stroke-width="1.050"/>
<path d="M567.600,81.500 V80 Q567.600,77.900 570,77.900 Q572.400,77.900 572.400,80 V81.500" fill="none" stroke="#000" stroke-width="1.700"/><rect x="565.600" y="81.200" width="8.800" height="8.500" rx=".8" fill="#fff" stroke="#000" stroke-width="1.200"/><circle cx="570" cy="84.600" r="1.100" fill="#444"/><path d="M570,85v2" stroke="#444" stroke-width=".9"/></g>
<text x="171.300" y="90.300" font-size="12" font-weight="bold" fill="#3a72b8" letter-spacing=".2">2D :</text>
<text x="171.300" y="118.300" font-size="12" font-weight="bold" fill="#cbcbcb" letter-spacing=".2">3D :</text>
<rect x="203.5" y="105.500" width="16.500" height="16.500" fill="#f6f6f6" stroke="#c9c9c9" stroke-width="1"/><path d="M211.7,108.4 L216.6,113.3 L213.9,113.3 L213.9,119.2 L209.4,119.2 L209.4,113.3 L206.8,113.3Z" fill="#f8f8f8" stroke="#c9c9c9" stroke-width="1"/>
<rect x="229.5" y="105.500" width="16.500" height="16.500" fill="#f6f6f6" stroke="#c9c9c9" stroke-width="1"/><path d="M237.7,119.2 L232.8,114.2 L235.4,114.2 L235.4,108.4 L239.9,108.4 L239.9,114.2 L242.6,114.2Z" fill="#f8f8f8" stroke="#c9c9c9" stroke-width="1"/>
<rect x="255.5" y="105.500" width="16.500" height="16.500" fill="#f6f6f6" stroke="#c9c9c9" stroke-width="1"/><path d="M258.3,113.8 L263.2,108.8 L263.2,111.5 L269.1,111.5 L269.1,116.0 L263.2,116.0 L263.2,118.8Z" fill="#f8f8f8" stroke="#c9c9c9" stroke-width="1"/>
<rect x="281.5" y="105.500" width="16.500" height="16.500" fill="#f6f6f6" stroke="#c9c9c9" stroke-width="1"/><path d="M295.1,113.8 L290.1,118.8 L290.1,116.0 L284.3,116.0 L284.3,111.5 L290.1,111.5 L290.1,108.8Z" fill="#f8f8f8" stroke="#c9c9c9" stroke-width="1"/>
<path d="M321.5,108.0 L325.1,115.5 H317.9Z" fill="#c9c9c9"/><path d="M321.5,115V118.5" stroke="#c9c9c9" stroke-width="1.200"/><path d="M314.0,106.3L317.2,109.5 M317.2,109.5" stroke="#c9c9c9" stroke-width="1" fill="none"/><path d="M314.4,109.5 H317.2 V106.7" stroke="#c9c9c9" stroke-width="1" fill="none"/><path d="M314.0,121.3L317.2,118.1 M317.2,118.1" stroke="#c9c9c9" stroke-width="1" fill="none"/><path d="M314.4,118.1 H317.2 V120.89999999999999" stroke="#c9c9c9" stroke-width="1" fill="none"/><path d="M329.0,106.3L325.8,109.5 M325.8,109.5" stroke="#c9c9c9" stroke-width="1" fill="none"/><path d="M328.6,109.5 H325.8 V106.7" stroke="#c9c9c9" stroke-width="1" fill="none"/><path d="M329.0,121.3L325.8,118.1 M325.8,118.1" stroke="#c9c9c9" stroke-width="1" fill="none"/><path d="M328.6,118.1 H325.8 V120.89999999999999" stroke="#c9c9c9" stroke-width="1" fill="none"/>
<path d="M347.5,109.7 L350.1,115.5 H344.9Z" fill="#c9c9c9"/><path d="M347.5,115V117.5" stroke="#c9c9c9" stroke-width="1.200"/><path d="M340.0,106.3L343.2,109.5 M340.0,106.3" stroke="#c9c9c9" stroke-width="1" fill="none"/><path d="M342.8,106.3 H340.0 V109.1" stroke="#c9c9c9" stroke-width="1" fill="none"/><path d="M340.0,121.3L343.2,118.1 M340.0,121.3" stroke="#c9c9c9" stroke-width="1" fill="none"/><path d="M342.8,121.3 H340.0 V118.5" stroke="#c9c9c9" stroke-width="1" fill="none"/><path d="M355.0,106.3L351.8,109.5 M355.0,106.3" stroke="#c9c9c9" stroke-width="1" fill="none"/><path d="M352.2,106.3 H355.0 V109.1" stroke="#c9c9c9" stroke-width="1" fill="none"/><path d="M355.0,121.3L351.8,118.1 M355.0,121.3" stroke="#c9c9c9" stroke-width="1" fill="none"/><path d="M352.2,121.3 H355.0 V118.5" stroke="#c9c9c9" stroke-width="1" fill="none"/>
<circle cx="383.5" cy="109.500" r="2.600" fill="#e2e2e2" stroke="#c9c9c9" stroke-width=".8"/><path d="M381.0,113 h5 l1,5 h-2 v4.500 h-1.200 v-4 h-.6 v4 h-1.200 v-4.500 h-2Z" fill="#e2e2e2" stroke="#c9c9c9" stroke-width=".7"/>
<circle cx="409.5" cy="109.500" r="2.600" fill="#e2e2e2" stroke="#c9c9c9" stroke-width=".8"/><path d="M407.0,113 h5 l1,5 h-2 v4.500 h-1.200 v-4 h-.6 v4 h-1.200 v-4.500 h-2Z" fill="#e2e2e2" stroke="#c9c9c9" stroke-width=".7"/>
<circle cx="432" cy="109.500" r="2.600" fill="#e2e2e2" stroke="#c9c9c9" stroke-width=".8"/><path d="M429.5,113 h5 l1,5 h-2 v4.500 h-1.200 v-4 h-.6 v4 h-1.200 v-4.500 h-2Z" fill="#e2e2e2" stroke="#c9c9c9" stroke-width=".7"/>
<circle cx="457.5" cy="109.500" r="2.600" fill="#e2e2e2" stroke="#c9c9c9" stroke-width=".8"/><path d="M455.0,113 h5 l1,5 h-2 v4.500 h-1.200 v-4 h-.6 v4 h-1.200 v-4.500 h-2Z" fill="#e2e2e2" stroke="#c9c9c9" stroke-width=".7"/>
<circle cx="483" cy="109.500" r="2.600" fill="#e2e2e2" stroke="#c9c9c9" stroke-width=".8"/><path d="M480.5,113 h5 l1,5 h-2 v4.500 h-1.200 v-4 h-.6 v4 h-1.200 v-4.500 h-2Z" fill="#e2e2e2" stroke="#c9c9c9" stroke-width=".7"/>
<circle cx="510" cy="109.500" r="2.600" fill="#e2e2e2" stroke="#c9c9c9" stroke-width=".8"/><path d="M507.5,113 h5 l1,5 h-2 v4.500 h-1.200 v-4 h-.6 v4 h-1.200 v-4.500 h-2Z" fill="#e2e2e2" stroke="#c9c9c9" stroke-width=".7"/>
<path d="M375,120 Q371.500,114 374.500,108.500 M372.800,109.800 l1.800,-2 l1,2.500" fill="none" stroke="#c9c9c9" stroke-width="1"/>
<path d="M402,108 Q397.500,114 401,120.500 M399,119 l2.200,2 l.3,-2.800" fill="none" stroke="#c9c9c9" stroke-width="1"/>
<path d="M423.500,114 Q422,119.500 432,120 Q441,119.500 440,114.500 M422,116 l1.500,-2.500 l1.800,2.200" fill="none" stroke="#c9c9c9" stroke-width="1"/>
<path d="M449.500,114.500 Q448,119.500 457.500,120 Q467,119.500 465.500,114 M463.800,116 l1.800,-2.400 l1.600,2.400" fill="none" stroke="#c9c9c9" stroke-width="1"/>
<path d="M476,112.500 Q477,106.500 483,106 Q489.500,106.500 490.500,112 M474.500,110.500 l1.500,2.500 l2,-2" fill="none" stroke="#c9c9c9" stroke-width="1"/>
<path d="M502.500,112 Q503.500,106.500 510,106 Q516,106.500 517,112.500 M515,110.500 l2,2.300 l1.600,-2.500" fill="none" stroke="#c9c9c9" stroke-width="1"/>
<path transform="translate(530.8,108) scale(0.95)" d="M0,0 H10 Q11.5,0 11.5,1.500 V7.300 H8.400 L11.900,10.200 L8.500,11.900 L6.400,7.300 H2.400 V12 H0Z M2.400,3.500 V5.600 H9.100 V3.500Z" fill="#c9c9c9" fill-rule="evenodd"/>
<path d="M558.500,108.500 L564,113.500 L558.500,118.500Z M564.500,108.500 L570,113.500 L564.500,118.500Z M570.500,108.500 L576,113.500 L570.500,118.500Z" fill="#f4f4f4" stroke="#d2d2d2" stroke-width="1"/>
<g filter="url(#ds)"><rect x="970" y="107" width="12.500" height="13" rx="1" fill="#fff" stroke="#000" stroke-width="1.200"/><path d="M972.500,110h7.500v7.500h-7.500Z M972.500,112.500h7.500 M972.500,115h7.500 M976.500,110v2.500 M975,112.500v2.500 M977.500,115v2.500" fill="none" stroke="#999" stroke-width=".8"/><path d="M984.500,106.500 l1.500,-1.500 M985.500,108.500 h1.800 M983,105.500v-1.500" stroke="#000" stroke-width=".9"/>
<rect x="999" y="107.500" width="10" height="11.500" fill="#fff" stroke="#000" stroke-width="1.200"/><path d="M1001,110.500h6M1001,113.500h6M1001,116.500h6M1004,108v11" stroke="#999" stroke-width=".8"/><path d="M996.500,106 L1011.500,120.500 M1011.500,106 L996.500,120.500" stroke="#000" stroke-width="1.300"/></g>
<rect x="1018.500" y="102.500" width="70" height="20" fill="#efefef" stroke="#dcdcdc"/><path d="M1018.500,123V102.500H1089" fill="none" stroke="#a6a6a6" stroke-width="1.600"/>
<text x="1053.500" y="118" font-size="14" text-anchor="middle" fill="#111" letter-spacing=".6" word-spacing="1.500">2 / 2</text>
<path d="M1100,108.500V118.500" stroke="#000" stroke-width="1.800"/><path d="M1107.500,108 V119 L1101.500,113.500Z" fill="#000"/><path d="M1132.300,108 V119 L1126,113.500Z" fill="#000"/>
<path d="M1153.500,108 V119 L1159.500,113.500Z" fill="#c4c4c4"/><path d="M1178.500,108 V119 L1184.300,113.500Z" fill="#c4c4c4"/><path d="M1185.500,108.500V118.500" stroke="#c4c4c4" stroke-width="1.800"/>
<rect x="480.500" y="46.500" width="66" height="22" fill="#fff" stroke="#8a8a8a"/><text x="484" y="62.300" font-size="12.300" fill="#222" letter-spacing=".1">37%</text><path d="M532,56 h6.500 l-3.250,3.600Z" fill="#111"/>
</svg>
<div id="toolline" class="a"></div>
<div id="canvas" class="a"></div>
<div id="page" class="a"></div>
<!-- panels -->
<div class="a" style="left:512px;top:177px;width:326px;height:234px;border:1px solid #000"></div>
<svg class="a" id="scene" style="left:513px;top:178px" width="324" height="232" viewBox="0 0 324 232">
<defs><linearGradient id="sky" x1="0" y1="0" x2="0" y2="1"><stop offset="0" stop-color="#36567f"/><stop offset=".5" stop-color="#335983"/><stop offset="1" stop-color="#326288"/></linearGradient><radialGradient id="glow"><stop offset="0" stop-color="#b9c3b6" stop-opacity=".75"/><stop offset=".3" stop-color="#8fa3ad" stop-opacity=".42"/><stop offset=".6" stop-color="#7590a8" stop-opacity=".14"/><stop offset="1" stop-color="#5d7f9f" stop-opacity="0"/></radialGradient><filter id="b1" x="-20%" y="-20%" width="140%" height="140%"><feGaussianBlur stdDeviation="1.3"/></filter><filter id="b2" x="-20%" y="-20%" width="140%" height="140%"><feGaussianBlur stdDeviation="2.2"/></filter><filter id="b0" x="-50%" y="-50%" width="200%" height="200%"><feGaussianBlur stdDeviation=".35"/></filter></defs>
<rect width="324" height="232" fill="url(#sky)"/>
<circle cx="126.7" cy="21.2" r="64" fill="url(#glow)"/>
<g filter="url(#b0)"><circle cx="104.9" cy="56.2" r="0.7" fill="#cfe4ee" opacity="0.27"/><circle cx="266.1" cy="39.4" r="0.6" fill="#cfe4ee" opacity="0.28"/><circle cx="164.4" cy="19.8" r="0.5" fill="#cfe4ee" opacity="0.46"/><circle cx="78.0" cy="148.4" r="0.35" fill="#cfe4ee" opacity="0.66"/><circle cx="40.1" cy="75.3" r="0.7" fill="#cfe4ee" opacity="0.54"/><circle cx="20.0" cy="155.3" r="0.35" fill="#cfe4ee" opacity="0.74"/><circle cx="15.1" cy="206.9" r="0.45" fill="#cfe4ee" opacity="0.46"/><circle cx="175.2" cy="152.4" r="0.6" fill="#cfe4ee" opacity="0.66"/><circle cx="58.6" cy="154.5" r="0.7" fill="#cfe4ee" opacity="0.34"/><circle cx="31.6" cy="179.8" r="0.6" fill="#cfe4ee" opacity="0.28"/><circle cx="66.7" cy="173.8" r="0.5" fill="#cfe4ee" opacity="0.64"/><circle cx="150.9" cy="218.5" r="0.45" fill="#cfe4ee" opacity="0.40"/><circle cx="257.4" cy="177.4" r="0.4" fill="#cfe4ee" opacity="0.29"/><circle cx="97.3" cy="136.9" r="0.45" fill="#cfe4ee" opacity="0.61"/><circle cx="93.3" cy="228.5" r="0.35" fill="#cfe4ee" opacity="0.51"/><circle cx="53.4" cy="103.8" r="0.5" fill="#cfe4ee" opacity="0.46"/><circle cx="311.7" cy="34.1" r="0.6" fill="#cfe4ee" opacity="0.54"/><circle cx="283.7" cy="97.3" r="0.7" fill="#cfe4ee" opacity="0.43"/><circle cx="160.9" cy="195.7" r="0.35" fill="#cfe4ee" opacity="0.67"/><circle cx="306.1" cy="132.6" r="0.7" fill="#cfe4ee" opacity="0.28"/><circle cx="236.9" cy="96.3" r="0.6" fill="#cfe4ee" opacity="0.75"/><circle cx="266.3" cy="90.4" r="0.5" fill="#cfe4ee" opacity="0.69"/><circle cx="112.4" cy="221.6" r="0.45" fill="#cfe4ee" opacity="0.33"/><circle cx="37.9" cy="27.8" r="0.45" fill="#cfe4ee" opacity="0.31"/><circle cx="80.2" cy="114.7" r="0.5" fill="#cfe4ee" opacity="0.29"/><circle cx="145.5" cy="148.1" r="0.4" fill="#cfe4ee" opacity="0.66"/><circle cx="279.9" cy="88.9" r="0.5" fill="#cfe4ee" opacity="0.74"/><circle cx="221.2" cy="112.4" r="0.4" fill="#cfe4ee" opacity="0.33"/><circle cx="57.1" cy="77.5" r="0.4" fill="#cfe4ee" opacity="0.26"/><circle cx="269.3" cy="64.7" r="0.45" fill="#cfe4ee" opacity="0.25"/><circle cx="135.7" cy="109.9" r="0.6" fill="#cfe4ee" opacity="0.41"/><circle cx="40.7" cy="207.0" r="0.6" fill="#cfe4ee" opacity="0.58"/><circle cx="239.7" cy="128.9" r="0.7" fill="#cfe4ee" opacity="0.65"/><circle cx="127.1" cy="116.5" r="0.35" fill="#cfe4ee" opacity="0.49"/><circle cx="129.7" cy="66.9" r="0.4" fill="#cfe4ee" opacity="0.47"/><circle cx="35.6" cy="158.3" r="0.35" fill="#cfe4ee" opacity="0.25"/><circle cx="49.0" cy="41.7" r="0.45" fill="#cfe4ee" opacity="0.56"/><circle cx="22.8" cy="71.4" r="0.5" fill="#cfe4ee" opacity="0.32"/><circle cx="81.7" cy="105.0" r="0.45" fill="#cfe4ee" opacity="0.49"/><circle cx="37.4" cy="135.5" r="0.5" fill="#cfe4ee" opacity="0.49"/><circle cx="101.0" cy="54.3" r="0.7" fill="#cfe4ee" opacity="0.42"/><circle cx="85.8" cy="201.5" r="0.4" fill="#cfe4ee" opacity="0.51"/><circle cx="66.5" cy="223.6" r="0.45" fill="#cfe4ee" opacity="0.32"/><circle cx="176.0" cy="15.5" r="0.6" fill="#cfe4ee" opacity="0.40"/><circle cx="208.3" cy="38.4" r="0.45" fill="#cfe4ee" opacity="0.51"/><circle cx="294.3" cy="106.9" r="0.4" fill="#cfe4ee" opacity="0.52"/><circle cx="252.4" cy="100.9" r="0.4" fill="#cfe4ee" opacity="0.56"/><circle cx="255.4" cy="188.5" r="0.4" fill="#cfe4ee" opacity="0.65"/><circle cx="265.1" cy="185.1" r="0.4" fill="#cfe4ee" opacity="0.35"/><circle cx="159.7" cy="183.4" r="0.35" fill="#cfe4ee" opacity="0.65"/><circle cx="153.0" cy="67.7" r="0.6" fill="#cfe4ee" opacity="0.73"/><circle cx="144.9" cy="221.0" r="0.45" fill="#cfe4ee" opacity="0.73"/><circle cx="118.1" cy="74.6" r="0.4" fill="#cfe4ee" opacity="0.49"/><circle cx="109.4" cy="134.3" r="0.6" fill="#cfe4ee" opacity="0.67"/><circle cx="155.3" cy="168.5" r="0.7" fill="#cfe4ee" opacity="0.29"/><circle cx="214.0" cy="216.1" r="0.7" fill="#cfe4ee" opacity="0.63"/><circle cx="154.9" cy="63.7" r="0.7" fill="#cfe4ee" opacity="0.42"/><circle cx="259.5" cy="227.1" r="0.5" fill="#cfe4ee" opacity="0.48"/><circle cx="240.8" cy="36.5" r="0.4" fill="#cfe4ee" opacity="0.34"/><circle cx="41.2" cy="56.2" r="0.5" fill="#cfe4ee" opacity="0.65"/><circle cx="47.4" cy="201.1" r="0.5" fill="#cfe4ee" opacity="0.58"/><circle cx="113.5" cy="147.9" r="0.4" fill="#cfe4ee" opacity="0.26"/><circle cx="259.0" cy="182.5" r="0.35" fill="#cfe4ee" opacity="0.51"/><circle cx="302.5" cy="124.0" r="0.4" fill="#cfe4ee" opacity="0.66"/><circle cx="68.4" cy="82.5" r="0.45" fill="#cfe4ee" opacity="0.50"/><circle cx="247.4" cy="100.1" r="0.6" fill="#cfe4ee" opacity="0.46"/><circle cx="42.5" cy="216.2" r="0.45" fill="#cfe4ee" opacity="0.70"/><circle cx="214.6" cy="199.0" r="0.6" fill="#cfe4ee" opacity="0.46"/><circle cx="297.3" cy="138.3" r="0.6" fill="#cfe4ee" opacity="0.33"/><circle cx="165.4" cy="209.5" r="0.4" fill="#cfe4ee" opacity="0.55"/><circle cx="251.4" cy="55.9" r="0.4" fill="#cfe4ee" opacity="0.49"/><circle cx="235.0" cy="149.5" r="0.45" fill="#cfe4ee" opacity="0.59"/><circle cx="172.0" cy="134.3" r="0.35" fill="#cfe4ee" opacity="0.69"/><circle cx="18.4" cy="67.1" r="0.35" fill="#cfe4ee" opacity="0.64"/><circle cx="164.5" cy="150.5" r="0.35" fill="#cfe4ee" opacity="0.47"/><circle cx="198.5" cy="139.1" r="0.6" fill="#cfe4ee" opacity="0.35"/><circle cx="89.8" cy="139.6" r="0.5" fill="#cfe4ee" opacity="0.50"/><circle cx="80.2" cy="142.7" r="0.45" fill="#cfe4ee" opacity="0.71"/><circle cx="289.3" cy="70.1" r="0.5" fill="#cfe4ee" opacity="0.32"/><circle cx="39.4" cy="125.8" r="0.35" fill="#cfe4ee" opacity="0.59"/><circle cx="138.8" cy="72.7" r="0.45" fill="#cfe4ee" opacity="0.64"/><circle cx="290.6" cy="57.2" r="0.7" fill="#cfe4ee" opacity="0.57"/><circle cx="118.6" cy="82.8" r="0.4" fill="#cfe4ee" opacity="0.73"/><circle cx="71.1" cy="223.7" r="0.5" fill="#cfe4ee" opacity="0.69"/><circle cx="52.7" cy="171.4" r="0.4" fill="#cfe4ee" opacity="0.33"/><circle cx="139.8" cy="141.2" r="0.45" fill="#cfe4ee" opacity="0.46"/><circle cx="115.5" cy="38.8" r="0.45" fill="#cfe4ee" opacity="0.26"/><circle cx="179.5" cy="125.4" r="0.35" fill="#cfe4ee" opacity="0.44"/><circle cx="167.6" cy="93.0" r="0.35" fill="#cfe4ee" opacity="0.31"/><circle cx="297.6" cy="76.7" r="0.35" fill="#cfe4ee" opacity="0.29"/><circle cx="88.1" cy="215.4" r="0.4" fill="#cfe4ee" opacity="0.39"/><circle cx="42.0" cy="121.5" r="0.7" fill="#cfe4ee" opacity="0.66"/><circle cx="83.8" cy="55.7" r="0.6" fill="#cfe4ee" opacity="0.54"/><circle cx="226.9" cy="38.0" r="0.35" fill="#cfe4ee" opacity="0.65"/><circle cx="59.4" cy="213.5" r="0.45" fill="#cfe4ee" opacity="0.72"/><circle cx="205.6" cy="196.5" r="0.35" fill="#cfe4ee" opacity="0.55"/><circle cx="72.1" cy="85.6" r="0.35" fill="#cfe4ee" opacity="0.48"/><circle cx="109.9" cy="148.8" r="0.45" fill="#cfe4ee" opacity="0.56"/><circle cx="14.0" cy="179.4" r="0.35" fill="#cfe4ee" opacity="0.73"/><circle cx="84.9" cy="64.4" r="0.45" fill="#cfe4ee" opacity="0.56"/><circle cx="172.1" cy="70.9" r="0.5" fill="#cfe4ee" opacity="0.50"/><circle cx="57.6" cy="104.9" r="0.35" fill="#cfe4ee" opacity="0.75"/><circle cx="12.0" cy="11.6" r="0.6" fill="#cfe4ee" opacity="0.53"/><circle cx="61.4" cy="132.7" r="0.5" fill="#cfe4ee" opacity="0.30"/><circle cx="265.3" cy="123.7" r="0.5" fill="#cfe4ee" opacity="0.52"/><circle cx="287.9" cy="226.8" r="0.45" fill="#cfe4ee" opacity="0.59"/><circle cx="318.3" cy="103.9" r="0.7" fill="#cfe4ee" opacity="0.61"/><circle cx="45.3" cy="230.2" r="0.35" fill="#cfe4ee" opacity="0.67"/><circle cx="4.6" cy="163.2" r="0.45" fill="#cfe4ee" opacity="0.47"/><circle cx="17.9" cy="170.9" r="0.5" fill="#cfe4ee" opacity="0.69"/><circle cx="217.3" cy="89.8" r="0.4" fill="#cfe4ee" opacity="0.60"/><circle cx="14.7" cy="65.5" r="0.45" fill="#cfe4ee" opacity="0.47"/><circle cx="85.3" cy="225.3" r="0.6" fill="#cfe4ee" opacity="0.41"/><circle cx="11.2" cy="211.2" r="0.4" fill="#cfe4ee" opacity="0.43"/><circle cx="0.3" cy="112.6" r="0.5" fill="#cfe4ee" opacity="0.39"/><circle cx="212.5" cy="81.6" r="0.35" fill="#cfe4ee" opacity="0.30"/><circle cx="264.7" cy="54.2" r="0.6" fill="#cfe4ee" opacity="0.27"/><circle cx="7.3" cy="95.0" r="0.4" fill="#cfe4ee" opacity="0.29"/><circle cx="310.3" cy="206.0" r="0.4" fill="#cfe4ee" opacity="0.58"/><circle cx="232.0" cy="210.6" r="0.5" fill="#cfe4ee" opacity="0.63"/><circle cx="233.5" cy="136.7" r="0.45" fill="#cfe4ee" opacity="0.61"/><circle cx="208.4" cy="22.2" r="0.7" fill="#cfe4ee" opacity="0.70"/><circle cx="203.3" cy="183.9" r="0.6" fill="#cfe4ee" opacity="0.32"/><circle cx="169.7" cy="138.9" r="0.35" fill="#cfe4ee" opacity="0.66"/><circle cx="189.2" cy="213.1" r="0.7" fill="#cfe4ee" opacity="0.73"/><circle cx="208.3" cy="36.6" r="0.35" fill="#cfe4ee" opacity="0.32"/><circle cx="116.9" cy="42.8" r="0.5" fill="#cfe4ee" opacity="0.53"/><circle cx="203.4" cy="163.3" r="0.7" fill="#cfe4ee" opacity="0.37"/><circle cx="85.5" cy="128.9" r="0.35" fill="#cfe4ee" opacity="0.62"/><circle cx="163.0" cy="145.2" r="0.7" fill="#cfe4ee" opacity="0.51"/><circle cx="241.6" cy="132.5" r="0.35" fill="#cfe4ee" opacity="0.67"/><circle cx="76.1" cy="188.2" r="0.4" fill="#cfe4ee" opacity="0.62"/><circle cx="316.1" cy="136.7" r="0.5" fill="#cfe4ee" opacity="0.29"/><circle cx="295.0" cy="91.0" r="0.35" fill="#cfe4ee" opacity="0.56"/><circle cx="208.3" cy="34.1" r="0.4" fill="#cfe4ee" opacity="0.42"/><circle cx="211.1" cy="176.2" r="0.6" fill="#cfe4ee" opacity="0.53"/><circle cx="4.0" cy="28.4" r="0.45" fill="#cfe4ee" opacity="0.74"/><circle cx="32.2" cy="73.9" r="0.5" fill="#cfe4ee" opacity="0.40"/><circle cx="167.4" cy="130.6" r="0.5" fill="#cfe4ee" opacity="0.63"/><circle cx="321.8" cy="148.0" r="0.45" fill="#cfe4ee" opacity="0.74"/><circle cx="303.3" cy="11.2" r="0.5" fill="#cfe4ee" opacity="0.29"/><circle cx="164.1" cy="231.1" r="0.45" fill="#cfe4ee" opacity="0.44"/><circle cx="297.0" cy="219.8" r="0.35" fill="#cfe4ee" opacity="0.54"/><circle cx="45.9" cy="142.9" r="0.45" fill="#cfe4ee" opacity="0.32"/><circle cx="265.8" cy="139.8" r="0.35" fill="#cfe4ee" opacity="0.60"/><circle cx="75.0" cy="214.0" r="0.5" fill="#cfe4ee" opacity="0.45"/><circle cx="51.5" cy="223.2" r="0.7" fill="#cfe4ee" opacity="0.48"/><circle cx="97.8" cy="53.3" r="0.45" fill="#cfe4ee" opacity="0.44"/><circle cx="39.2" cy="101.3" r="0.45" fill="#cfe4ee" opacity="0.63"/><circle cx="271.9" cy="47.3" r="0.4" fill="#cfe4ee" opacity="0.61"/><circle cx="292.1" cy="91.6" r="0.45" fill="#cfe4ee" opacity="0.28"/><circle cx="126.4" cy="209.0" r="0.35" fill="#cfe4ee" opacity="0.43"/><circle cx="138.7" cy="88.1" r="0.35" fill="#cfe4ee" opacity="0.39"/><circle cx="16.7" cy="170.3" r="0.7" fill="#cfe4ee" opacity="0.72"/><circle cx="80.8" cy="85.9" r="0.6" fill="#cfe4ee" opacity="0.41"/><circle cx="250.5" cy="193.5" r="0.5" fill="#cfe4ee" opacity="0.69"/><circle cx="263.1" cy="164.2" r="0.6" fill="#cfe4ee" opacity="0.52"/><circle cx="233.1" cy="24.3" r="0.7" fill="#cfe4ee" opacity="0.46"/><circle cx="199.2" cy="52.7" r="0.45" fill="#cfe4ee" opacity="0.49"/><circle cx="295.5" cy="148.2" r="0.4" fill="#cfe4ee" opacity="0.49"/><circle cx="111.3" cy="93.5" r="0.7" fill="#cfe4ee" opacity="0.62"/><circle cx="211.5" cy="118.0" r="0.4" fill="#cfe4ee" opacity="0.40"/><circle cx="180.6" cy="115.5" r="0.4" fill="#cfe4ee" opacity="0.57"/><circle cx="24.4" cy="138.1" r="0.5" fill="#cfe4ee" opacity="0.53"/><circle cx="146.8" cy="101.7" r="0.5" fill="#cfe4ee" opacity="0.46"/><circle cx="177.5" cy="80.6" r="0.4" fill="#cfe4ee" opacity="0.42"/><circle cx="29.5" cy="79.3" r="0.45" fill="#cfe4ee" opacity="0.65"/><circle cx="65.5" cy="12.4" r="0.5" fill="#cfe4ee" opacity="0.44"/><circle cx="241.7" cy="72.0" r="0.45" fill="#cfe4ee" opacity="0.42"/><circle cx="20.1" cy="88.7" r="0.45" fill="#cfe4ee" opacity="0.31"/><circle cx="163.1" cy="164.0" r="0.4" fill="#cfe4ee" opacity="0.30"/><circle cx="290.6" cy="113.3" r="0.7" fill="#cfe4ee" opacity="0.47"/><circle cx="309.1" cy="205.1" r="0.35" fill="#cfe4ee" opacity="0.31"/><circle cx="137.8" cy="189.5" r="0.5" fill="#cfe4ee" opacity="0.73"/><circle cx="158.7" cy="32.6" r="0.6" fill="#cfe4ee" opacity="0.68"/><circle cx="315.0" cy="81.6" r="0.35" fill="#cfe4ee" opacity="0.36"/><circle cx="49.3" cy="227.1" r="0.35" fill="#cfe4ee" opacity="0.72"/><circle cx="233.8" cy="167.4" r="0.5" fill="#cfe4ee" opacity="0.29"/><circle cx="251.7" cy="1.6" r="0.4" fill="#cfe4ee" opacity="0.37"/><circle cx="298.1" cy="167.1" r="0.45" fill="#cfe4ee" opacity="0.73"/><circle cx="203.0" cy="143.8" r="0.5" fill="#cfe4ee" opacity="0.60"/><circle cx="36.3" cy="31.7" r="0.6" fill="#cfe4ee" opacity="0.72"/><circle cx="62.1" cy="84.7" r="0.6" fill="#cfe4ee" opacity="0.25"/><circle cx="174.1" cy="231.4" r="0.45" fill="#cfe4ee" opacity="0.73"/><circle cx="208.8" cy="211.5" r="0.5" fill="#cfe4ee" opacity="0.51"/><circle cx="177.2" cy="16.4" r="0.5" fill="#cfe4ee" opacity="0.60"/><circle cx="99.6" cy="13.2" r="0.5" fill="#cfe4ee" opacity="0.69"/><circle cx="209.7" cy="35.3" r="0.4" fill="#cfe4ee" opacity="0.58"/><circle cx="299.8" cy="76.2" r="0.35" fill="#cfe4ee" opacity="0.60"/><circle cx="232.7" cy="108.3" r="0.5" fill="#cfe4ee" opacity="0.35"/><circle cx="258.2" cy="184.9" r="0.6" fill="#cfe4ee" opacity="0.28"/><circle cx="160.6" cy="69.5" r="0.4" fill="#cfe4ee" opacity="0.37"/><circle cx="71.7" cy="188.9" r="0.45" fill="#cfe4ee" opacity="0.30"/><circle cx="202.0" cy="160.2" r="0.4" fill="#cfe4ee" opacity="0.49"/><circle cx="295.0" cy="26.9" r="0.6" fill="#cfe4ee" opacity="0.32"/><circle cx="127.5" cy="72.7" r="0.6" fill="#cfe4ee" opacity="0.32"/><circle cx="16.8" cy="28.2" r="0.5" fill="#cfe4ee" opacity="0.47"/><circle cx="230.7" cy="97.4" r="0.35" fill="#cfe4ee" opacity="0.75"/><circle cx="301.8" cy="100.8" r="0.4" fill="#cfe4ee" opacity="0.58"/><circle cx="170.0" cy="131.2" r="0.45" fill="#cfe4ee" opacity="0.58"/><circle cx="122.7" cy="110.9" r="0.45" fill="#cfe4ee" opacity="0.47"/><circle cx="35.3" cy="34.3" r="0.35" fill="#cfe4ee" opacity="0.43"/><circle cx="309.6" cy="48.4" r="0.4" fill="#cfe4ee" opacity="0.44"/><circle cx="249.1" cy="96.1" r="0.5" fill="#cfe4ee" opacity="0.29"/><circle cx="228.5" cy="68.3" r="0.6" fill="#cfe4ee" opacity="0.71"/><circle cx="62.5" cy="108.8" r="0.5" fill="#cfe4ee" opacity="0.27"/><circle cx="133.1" cy="198.4" r="0.5" fill="#cfe4ee" opacity="0.27"/><circle cx="11.3" cy="29.0" r="0.35" fill="#cfe4ee" opacity="0.38"/><circle cx="242.1" cy="214.1" r="0.45" fill="#cfe4ee" opacity="0.43"/><circle cx="108.5" cy="223.9" r="0.35" fill="#cfe4ee" opacity="0.38"/><circle cx="232.2" cy="97.9" r="0.45" fill="#cfe4ee" opacity="0.40"/><circle cx="233.8" cy="157.3" r="0.7" fill="#cfe4ee" opacity="0.72"/><circle cx="21.2" cy="201.0" r="0.35" fill="#cfe4ee" opacity="0.49"/><circle cx="310.0" cy="223.9" r="0.5" fill="#cfe4ee" opacity="0.64"/><circle cx="296.0" cy="199.0" r="0.4" fill="#cfe4ee" opacity="0.71"/><circle cx="59.3" cy="196.7" r="0.7" fill="#cfe4ee" opacity="0.40"/><circle cx="224.2" cy="56.3" r="0.4" fill="#cfe4ee" opacity="0.41"/><circle cx="103.5" cy="108.2" r="0.6" fill="#cfe4ee" opacity="0.29"/><circle cx="63.9" cy="187.5" r="0.4" fill="#cfe4ee" opacity="0.45"/><circle cx="210.5" cy="134.1" r="0.6" fill="#cfe4ee" opacity="0.41"/><circle cx="317.6" cy="211.4" r="0.35" fill="#cfe4ee" opacity="0.38"/><circle cx="27.2" cy="40.1" r="0.5" fill="#cfe4ee" opacity="0.74"/><circle cx="315.0" cy="62.3" r="0.4" fill="#cfe4ee" opacity="0.46"/><circle cx="201.0" cy="172.6" r="0.7" fill="#cfe4ee" opacity="0.52"/><circle cx="250.7" cy="188.8" r="0.45" fill="#cfe4ee" opacity="0.40"/><circle cx="183.7" cy="110.7" r="0.7" fill="#cfe4ee" opacity="0.38"/><circle cx="142.4" cy="65.6" r="0.4" fill="#cfe4ee" opacity="0.33"/><circle cx="286.5" cy="153.8" r="0.45" fill="#cfe4ee" opacity="0.28"/><circle cx="81.5" cy="81.0" r="0.6" fill="#cfe4ee" opacity="0.37"/><circle cx="261.9" cy="168.6" r="0.35" fill="#cfe4ee" opacity="0.30"/><circle cx="153.8" cy="199.8" r="0.5" fill="#cfe4ee" opacity="0.71"/><circle cx="13.1" cy="92.6" r="0.35" fill="#cfe4ee" opacity="0.28"/><circle cx="194.6" cy="201.4" r="0.4" fill="#cfe4ee" opacity="0.72"/><circle cx="120.6" cy="208.3" r="0.5" fill="#cfe4ee" opacity="0.55"/><circle cx="251.1" cy="170.8" r="0.35" fill="#cfe4ee" opacity="0.30"/><circle cx="193.2" cy="162.1" r="0.4" fill="#cfe4ee" opacity="0.27"/><circle cx="110.2" cy="22.4" r="0.45" fill="#cfe4ee" opacity="0.27"/><circle cx="237.2" cy="216.9" r="0.35" fill="#cfe4ee" opacity="0.66"/><circle cx="132.5" cy="110.5" r="0.6" fill="#cfe4ee" opacity="0.41"/><circle cx="65.9" cy="195.4" r="0.6" fill="#cfe4ee" opacity="0.49"/><circle cx="132.2" cy="195.5" r="0.7" fill="#cfe4ee" opacity="0.53"/><circle cx="207.1" cy="38.5" r="0.4" fill="#cfe4ee" opacity="0.45"/><circle cx="87.9" cy="230.0" r="0.7" fill="#cfe4ee" opacity="0.40"/><circle cx="308.8" cy="96.9" r="0.6" fill="#cfe4ee" opacity="0.69"/><circle cx="134.2" cy="11.5" r="0.45" fill="#cfe4ee" opacity="0.57"/><circle cx="126.6" cy="117.8" r="0.35" fill="#cfe4ee" opacity="0.47"/><circle cx="50.7" cy="45.4" r="0.35" fill="#cfe4ee" opacity="0.45"/><circle cx="286.0" cy="129.8" r="0.4" fill="#cfe4ee" opacity="0.31"/><circle cx="16.7" cy="53.8" r="0.5" fill="#cfe4ee" opacity="0.29"/><circle cx="201.6" cy="110.3" r="0.6" fill="#cfe4ee" opacity="0.34"/><circle cx="112.7" cy="59.2" r="0.4" fill="#cfe4ee" opacity="0.71"/><circle cx="35.2" cy="136.0" r="0.4" fill="#cfe4ee" opacity="0.40"/><circle cx="271.3" cy="22.1" r="0.5" fill="#cfe4ee" opacity="0.41"/><circle cx="196.9" cy="165.3" r="0.35" fill="#cfe4ee" opacity="0.70"/><circle cx="201.0" cy="200.7" r="0.4" fill="#cfe4ee" opacity="0.57"/><circle cx="277.5" cy="162.3" r="0.6" fill="#cfe4ee" opacity="0.67"/><circle cx="268.7" cy="64.9" r="0.4" fill="#cfe4ee" opacity="0.27"/><circle cx="304.1" cy="57.7" r="0.45" fill="#cfe4ee" opacity="0.31"/><circle cx="80.0" cy="182.3" r="0.4" fill="#cfe4ee" opacity="0.27"/><circle cx="182.2" cy="188.4" r="0.35" fill="#cfe4ee" opacity="0.58"/><circle cx="105.0" cy="114.5" r="0.5" fill="#cfe4ee" opacity="0.53"/><circle cx="203.2" cy="95.5" r="0.5" fill="#cfe4ee" opacity="0.40"/><circle cx="80.8" cy="114.3" r="0.45" fill="#cfe4ee" opacity="0.47"/><circle cx="142.0" cy="13.9" r="0.6" fill="#cfe4ee" opacity="0.74"/><circle cx="150.7" cy="126.8" r="0.6" fill="#cfe4ee" opacity="0.64"/><circle cx="148.5" cy="64.0" r="0.5" fill="#cfe4ee" opacity="0.45"/><circle cx="21.7" cy="107.5" r="0.45" fill="#cfe4ee" opacity="0.30"/><circle cx="143.2" cy="140.0" r="0.35" fill="#cfe4ee" opacity="0.27"/><circle cx="42.2" cy="218.3" r="0.45" fill="#cfe4ee" opacity="0.64"/><circle cx="165.7" cy="26.1" r="0.6" fill="#cfe4ee" opacity="0.70"/><circle cx="211.5" cy="193.3" r="0.35" fill="#cfe4ee" opacity="0.68"/><circle cx="322.7" cy="183.6" r="0.35" fill="#cfe4ee" opacity="0.35"/><circle cx="318.1" cy="136.3" r="0.4" fill="#cfe4ee" opacity="0.59"/><circle cx="233.6" cy="74.8" r="0.45" fill="#cfe4ee" opacity="0.56"/><circle cx="81.7" cy="99.6" r="0.6" fill="#cfe4ee" opacity="0.39"/><circle cx="264.3" cy="54.1" r="0.6" fill="#cfe4ee" opacity="0.73"/><circle cx="155.6" cy="156.6" r="0.6" fill="#cfe4ee" opacity="0.50"/><circle cx="103.4" cy="19.5" r="0.4" fill="#cfe4ee" opacity="0.45"/><circle cx="206.2" cy="88.9" r="0.45" fill="#cfe4ee" opacity="0.70"/><circle cx="54.7" cy="193.5" r="0.35" fill="#cfe4ee" opacity="0.63"/><circle cx="15.7" cy="206.9" r="0.5" fill="#cfe4ee" opacity="0.53"/><circle cx="187.9" cy="211.2" r="0.35" fill="#cfe4ee" opacity="0.38"/><circle cx="173.6" cy="206.6" r="0.7" fill="#cfe4ee" opacity="0.65"/><circle cx="85.8" cy="230.3" r="0.6" fill="#cfe4ee" opacity="0.32"/><circle cx="107.2" cy="35.4" r="0.4" fill="#cfe4ee" opacity="0.34"/><circle cx="240.9" cy="23.9" r="0.6" fill="#cfe4ee" opacity="0.38"/><circle cx="207.1" cy="229.2" r="0.6" fill="#cfe4ee" opacity="0.71"/><circle cx="290.2" cy="183.8" r="0.7" fill="#cfe4ee" opacity="0.27"/><circle cx="48.4" cy="161.3" r="0.5" fill="#cfe4ee" opacity="0.46"/><circle cx="118.0" cy="23.7" r="0.5" fill="#cfe4ee" opacity="0.36"/><circle cx="211.6" cy="13.4" r="0.35" fill="#cfe4ee" opacity="0.53"/><circle cx="98.4" cy="142.7" r="0.6" fill="#cfe4ee" opacity="0.36"/><circle cx="189.1" cy="156.0" r="0.4" fill="#cfe4ee" opacity="0.43"/><circle cx="268.4" cy="58.3" r="0.35" fill="#cfe4ee" opacity="0.72"/><circle cx="78.9" cy="55.7" r="0.35" fill="#cfe4ee" opacity="0.28"/><circle cx="46.9" cy="170.9" r="0.45" fill="#cfe4ee" opacity="0.45"/><circle cx="85.6" cy="8.1" r="0.7" fill="#cfe4ee" opacity="0.66"/><circle cx="289.2" cy="157.1" r="0.6" fill="#cfe4ee" opacity="0.47"/><circle cx="303.6" cy="183.9" r="0.4" fill="#cfe4ee" opacity="0.33"/><circle cx="0.1" cy="28.7" r="0.35" fill="#cfe4ee" opacity="0.45"/><circle cx="77.0" cy="27.6" r="0.35" fill="#cfe4ee" opacity="0.26"/><circle cx="178.5" cy="221.6" r="0.4" fill="#cfe4ee" opacity="0.46"/><circle cx="167.9" cy="166.5" r="0.7" fill="#cfe4ee" opacity="0.57"/><circle cx="263.5" cy="62.7" r="0.45" fill="#cfe4ee" opacity="0.28"/><circle cx="202.8" cy="231.0" r="0.7" fill="#cfe4ee" opacity="0.64"/><circle cx="231.8" cy="5.2" r="0.5" fill="#cfe4ee" opacity="0.62"/><circle cx="150.7" cy="185.4" r="0.5" fill="#cfe4ee" opacity="0.34"/><circle cx="322.9" cy="84.8" r="0.7" fill="#cfe4ee" opacity="0.27"/><circle cx="108.7" cy="186.9" r="0.7" fill="#cfe4ee" opacity="0.72"/><circle cx="85.3" cy="25.5" r="0.7" fill="#cfe4ee" opacity="0.53"/><circle cx="141.3" cy="194.1" r="0.6" fill="#cfe4ee" opacity="0.74"/><circle cx="95.8" cy="219.5" r="0.4" fill="#cfe4ee" opacity="0.29"/><circle cx="164.4" cy="61.4" r="0.4" fill="#cfe4ee" opacity="0.67"/><circle cx="65.7" cy="58.5" r="0.45" fill="#cfe4ee" opacity="0.35"/><circle cx="125.9" cy="158.4" r="0.5" fill="#cfe4ee" opacity="0.70"/><circle cx="204.3" cy="176.2" r="0.7" fill="#cfe4ee" opacity="0.67"/><circle cx="173.8" cy="132.1" r="0.6" fill="#cfe4ee" opacity="0.60"/><circle cx="277.8" cy="124.7" r="0.7" fill="#cfe4ee" opacity="0.37"/><circle cx="286.7" cy="194.3" r="0.5" fill="#cfe4ee" opacity="0.56"/><circle cx="25.2" cy="216.3" r="0.4" fill="#cfe4ee" opacity="0.27"/><circle cx="36.3" cy="162.5" r="0.4" fill="#cfe4ee" opacity="0.42"/><circle cx="46.0" cy="16.2" r="0.35" fill="#cfe4ee" opacity="0.32"/><circle cx="208.5" cy="21.8" r="0.35" fill="#cfe4ee" opacity="0.62"/><circle cx="21.3" cy="156.3" r="0.45" fill="#cfe4ee" opacity="0.35"/><circle cx="309.3" cy="144.9" r="0.7" fill="#cfe4ee" opacity="0.28"/><circle cx="281.2" cy="216.9" r="0.5" fill="#cfe4ee" opacity="0.30"/><circle cx="66.7" cy="44.9" r="0.35" fill="#cfe4ee" opacity="0.72"/><circle cx="295.2" cy="187.7" r="0.35" fill="#cfe4ee" opacity="0.66"/><circle cx="204.6" cy="91.1" r="0.35" fill="#cfe4ee" opacity="0.32"/><circle cx="256.6" cy="167.2" r="0.45" fill="#cfe4ee" opacity="0.41"/><circle cx="137.3" cy="12.8" r="0.45" fill="#cfe4ee" opacity="0.72"/><circle cx="15.7" cy="188.8" r="0.45" fill="#cfe4ee" opacity="0.63"/><circle cx="195.1" cy="133.0" r="0.45" fill="#cfe4ee" opacity="0.56"/><circle cx="10.0" cy="119.5" r="0.5" fill="#cfe4ee" opacity="0.51"/><circle cx="31.8" cy="131.5" r="0.35" fill="#cfe4ee" opacity="0.52"/><circle cx="70.2" cy="207.6" r="0.35" fill="#cfe4ee" opacity="0.54"/><circle cx="93.0" cy="124.5" r="0.6" fill="#cfe4ee" opacity="0.35"/><circle cx="246.9" cy="228.1" r="0.35" fill="#cfe4ee" opacity="0.42"/><circle cx="31.0" cy="176.6" r="0.4" fill="#cfe4ee" opacity="0.73"/><circle cx="192.0" cy="224.5" r="0.6" fill="#cfe4ee" opacity="0.38"/><circle cx="305.8" cy="90.2" r="0.4" fill="#cfe4ee" opacity="0.72"/><circle cx="75.0" cy="60.3" r="0.7" fill="#cfe4ee" opacity="0.63"/><circle cx="158.9" cy="230.5" r="0.6" fill="#cfe4ee" opacity="0.64"/><circle cx="203.5" cy="106.8" r="0.5" fill="#cfe4ee" opacity="0.71"/><circle cx="289.0" cy="186.1" r="0.5" fill="#cfe4ee" opacity="0.69"/><circle cx="8.2" cy="71.0" r="0.45" fill="#cfe4ee" opacity="0.46"/><circle cx="176.6" cy="61.7" r="0.7" fill="#cfe4ee" opacity="0.37"/><circle cx="149.3" cy="144.4" r="0.7" fill="#cfe4ee" opacity="0.63"/><circle cx="209.4" cy="105.2" r="0.45" fill="#cfe4ee" opacity="0.51"/><circle cx="281.2" cy="127.5" r="0.6" fill="#cfe4ee" opacity="0.62"/><circle cx="54.9" cy="125.1" r="0.45" fill="#cfe4ee" opacity="0.54"/><circle cx="40.8" cy="130.0" r="0.7" fill="#cfe4ee" opacity="0.37"/><circle cx="62.1" cy="94.4" r="0.7" fill="#cfe4ee" opacity="0.66"/><circle cx="200.0" cy="182.0" r="0.4" fill="#cfe4ee" opacity="0.61"/><circle cx="195.3" cy="105.3" r="0.4" fill="#cfe4ee" opacity="0.41"/><circle cx="61.3" cy="227.7" r="0.7" fill="#cfe4ee" opacity="0.75"/><circle cx="53.3" cy="169.5" r="0.4" fill="#cfe4ee" opacity="0.44"/><circle cx="318.8" cy="195.3" r="0.7" fill="#cfe4ee" opacity="0.40"/><circle cx="88.7" cy="44.1" r="0.35" fill="#cfe4ee" opacity="0.39"/><circle cx="286.8" cy="130.4" r="0.35" fill="#cfe4ee" opacity="0.45"/><circle cx="256.3" cy="176.3" r="0.6" fill="#cfe4ee" opacity="0.74"/><circle cx="96.0" cy="13.3" r="0.45" fill="#cfe4ee" opacity="0.55"/><circle cx="131.1" cy="185.3" r="0.5" fill="#cfe4ee" opacity="0.60"/><circle cx="190.3" cy="167.4" r="0.4" fill="#cfe4ee" opacity="0.58"/><circle cx="211.4" cy="210.4" r="0.7" fill="#cfe4ee" opacity="0.60"/><circle cx="276.2" cy="173.7" r="0.7" fill="#cfe4ee" opacity="0.31"/><circle cx="140.1" cy="84.4" r="0.7" fill="#cfe4ee" opacity="0.30"/><circle cx="135.9" cy="193.0" r="0.7" fill="#cfe4ee" opacity="0.61"/><circle cx="50.7" cy="205.3" r="0.5" fill="#cfe4ee" opacity="0.48"/><circle cx="201.4" cy="118.7" r="0.7" fill="#cfe4ee" opacity="0.58"/><circle cx="282.8" cy="213.4" r="0.45" fill="#cfe4ee" opacity="0.64"/><circle cx="125.9" cy="135.8" r="0.35" fill="#cfe4ee" opacity="0.27"/><circle cx="176.0" cy="58.9" r="0.4" fill="#cfe4ee" opacity="0.51"/><circle cx="32.8" cy="153.1" r="0.6" fill="#cfe4ee" opacity="0.35"/><circle cx="154.1" cy="10.5" r="0.45" fill="#cfe4ee" opacity="0.51"/><circle cx="133.0" cy="222.9" r="0.4" fill="#cfe4ee" opacity="0.75"/><circle cx="59.6" cy="140.8" r="0.35" fill="#cfe4ee" opacity="0.61"/><circle cx="198.9" cy="165.5" r="0.45" fill="#cfe4ee" opacity="0.39"/><circle cx="129.5" cy="9.1" r="0.5" fill="#cfe4ee" opacity="0.71"/><circle cx="203.7" cy="172.7" r="0.6" fill="#cfe4ee" opacity="0.38"/><circle cx="72.7" cy="185.4" r="0.6" fill="#cfe4ee" opacity="0.74"/><circle cx="322.1" cy="225.2" r="0.5" fill="#cfe4ee" opacity="0.36"/><circle cx="41.9" cy="191.9" r="0.7" fill="#cfe4ee" opacity="0.35"/><circle cx="208.1" cy="181.5" r="0.4" fill="#cfe4ee" opacity="0.43"/><circle cx="207.0" cy="199.7" r="0.5" fill="#cfe4ee" opacity="0.48"/><circle cx="95.4" cy="147.8" r="0.4" fill="#cfe4ee" opacity="0.64"/><circle cx="152.1" cy="193.2" r="0.4" fill="#cfe4ee" opacity="0.38"/><circle cx="121.9" cy="82.9" r="0.5" fill="#cfe4ee" opacity="0.59"/><circle cx="156.0" cy="197.2" r="0.45" fill="#cfe4ee" opacity="0.43"/><circle cx="212.0" cy="98.8" r="0.5" fill="#cfe4ee" opacity="0.46"/><circle cx="206.5" cy="169.7" r="0.45" fill="#cfe4ee" opacity="0.33"/><circle cx="98.2" cy="113.4" r="0.35" fill="#cfe4ee" opacity="0.66"/><circle cx="293.5" cy="193.3" r="0.4" fill="#cfe4ee" opacity="0.52"/><circle cx="111.8" cy="154.7" r="0.7" fill="#cfe4ee" opacity="0.26"/><circle cx="308.4" cy="169.1" r="0.45" fill="#cfe4ee" opacity="0.55"/><circle cx="187.4" cy="206.1" r="0.4" fill="#cfe4ee" opacity="0.64"/><circle cx="112.2" cy="56.7" r="0.5" fill="#cfe4ee" opacity="0.65"/><circle cx="54.4" cy="212.8" r="0.6" fill="#cfe4ee" opacity="0.74"/><circle cx="29.3" cy="214.7" r="0.6" fill="#cfe4ee" opacity="0.64"/><circle cx="271.8" cy="68.7" r="0.7" fill="#cfe4ee" opacity="0.36"/><circle cx="25.5" cy="203.4" r="0.7" fill="#cfe4ee" opacity="0.69"/><circle cx="179.8" cy="85.6" r="0.4" fill="#cfe4ee" opacity="0.66"/><circle cx="153.3" cy="149.6" r="0.5" fill="#cfe4ee" opacity="0.48"/><circle cx="46.8" cy="136.2" r="0.5" fill="#cfe4ee" opacity="0.33"/><circle cx="194.3" cy="184.1" r="0.4" fill="#cfe4ee" opacity="0.67"/><circle cx="151.6" cy="150.7" r="0.7" fill="#cfe4ee" opacity="0.40"/><circle cx="150.9" cy="122.3" r="0.7" fill="#cfe4ee" opacity="0.29"/><circle cx="206.4" cy="165.3" r="0.35" fill="#cfe4ee" opacity="0.26"/><circle cx="14.9" cy="184.5" r="0.45" fill="#cfe4ee" opacity="0.65"/><circle cx="30.4" cy="134.7" r="0.4" fill="#cfe4ee" opacity="0.27"/><circle cx="232.7" cy="163.1" r="0.45" fill="#cfe4ee" opacity="0.30"/><circle cx="213.5" cy="103.6" r="0.6" fill="#cfe4ee" opacity="0.53"/><circle cx="295.6" cy="90.3" r="0.45" fill="#cfe4ee" opacity="0.46"/><circle cx="179.5" cy="201.1" r="0.45" fill="#cfe4ee" opacity="0.43"/><circle cx="160.0" cy="101.9" r="0.45" fill="#cfe4ee" opacity="0.69"/><circle cx="111.7" cy="70.3" r="0.5" fill="#cfe4ee" opacity="0.65"/><circle cx="107.2" cy="98.0" r="0.45" fill="#cfe4ee" opacity="0.31"/><circle cx="315.2" cy="37.3" r="0.35" fill="#cfe4ee" opacity="0.45"/><circle cx="179.6" cy="118.0" r="0.6" fill="#cfe4ee" opacity="0.27"/><circle cx="97.3" cy="5.1" r="0.4" fill="#cfe4ee" opacity="0.66"/><circle cx="153.9" cy="190.0" r="0.35" fill="#cfe4ee" opacity="0.64"/><circle cx="294.8" cy="160.5" r="0.6" fill="#cfe4ee" opacity="0.32"/><circle cx="218.3" cy="175.5" r="0.7" fill="#cfe4ee" opacity="0.29"/><circle cx="12.8" cy="164.8" r="0.7" fill="#cfe4ee" opacity="0.63"/><circle cx="32.8" cy="64.5" r="0.35" fill="#cfe4ee" opacity="0.46"/><circle cx="32.6" cy="219.8" r="0.35" fill="#cfe4ee" opacity="0.43"/><circle cx="266.5" cy="193.8" r="0.6" fill="#cfe4ee" opacity="0.61"/><circle cx="279.4" cy="65.4" r="0.35" fill="#cfe4ee" opacity="0.41"/><circle cx="139.5" cy="166.3" r="0.35" fill="#cfe4ee" opacity="0.50"/><circle cx="169.2" cy="200.8" r="0.5" fill="#cfe4ee" opacity="0.54"/><circle cx="63.6" cy="74.4" r="1.05" fill="#fff" opacity=".95"/><circle cx="21.5" cy="128.1" r="1.05" fill="#fff" opacity=".95"/><circle cx="196.8" cy="54.7" r="1.05" fill="#fff" opacity=".95"/><circle cx="221" cy="188.1" r="1.05" fill="#fff" opacity=".95"/><circle cx="97.7" cy="227.5" r="1.05" fill="#fff" opacity=".95"/><circle cx="86" cy="139.8" r="1.05" fill="#fff" opacity=".95"/><circle cx="51.1" cy="149.3" r="1.05" fill="#fff" opacity=".95"/><circle cx="18" cy="183.1" r="1.05" fill="#fff" opacity=".95"/><circle cx="291.7" cy="226.6" r="1.05" fill="#fff" opacity=".95"/><circle cx="315" cy="121" r="1.05" fill="#fff" opacity=".95"/><circle cx="81" cy="79" r="1.05" fill="#fff" opacity=".95"/><circle cx="168" cy="75" r="1.05" fill="#fff" opacity=".95"/><circle cx="26" cy="38" r="1.05" fill="#fff" opacity=".95"/><circle cx="296" cy="18" r="1.05" fill="#fff" opacity=".95"/><circle cx="38" cy="237" r="1.05" fill="#fff" opacity=".95"/></g>
<g filter="url(#b1)">
<path d="M1.0,22.4C2.2,17.6 5.0,19.8 8.0,20.7C11.0,21.6 14.7,25.1 18.9,27.8C23.1,30.5 28.7,34.9 33.2,36.8C37.7,38.6 41.5,37.7 45.7,38.9C49.9,40.1 55.0,41.6 58.3,43.9C61.6,46.2 63.6,50.0 65.4,52.9C67.2,55.8 67.2,59.5 69.0,61.0C70.8,62.5 74.7,61.2 76.2,61.9C77.7,62.6 78.9,64.4 78.0,65.4C77.1,66.4 73.5,68.1 70.8,68.1C68.1,68.1 64.6,65.0 61.9,65.4C59.2,65.9 57.4,69.8 54.7,70.8C52.0,71.8 48.7,72.6 45.7,71.7C42.7,70.8 38.9,67.0 36.8,65.4C34.7,63.8 35.6,62.6 33.2,61.9C30.8,61.2 25.4,62.0 22.4,61.0C19.4,60.0 18.0,56.6 15.3,55.6C12.6,54.6 8.7,55.8 6.3,54.7C3.9,53.7 1.9,54.7 1.0,49.3C0.1,43.9 -0.2,27.2 1.0,22.4Z" fill="#dfe2d6"/>
<path d="M88.7,69.9C91.8,69.6 96.2,70.5 99.5,71.7C102.8,72.9 105.9,75.3 108.4,77.1C110.9,78.9 115.0,81.2 114.7,82.5C114.4,83.8 109.7,85.2 106.6,85.1C103.5,84.9 99.2,82.9 95.9,81.6C92.6,80.3 89.4,78.4 86.9,77.1C84.4,75.8 80.4,74.7 80.7,73.5C81.0,72.3 85.6,70.2 88.7,69.9Z" fill="#dfe2d6"/>
<path d="M178.9,9.9C177.9,6.9 178.8,2.7 183.3,1.0C187.8,-0.7 197.5,0.0 205.7,0.0C213.9,0.0 224.5,0.6 232.6,1.0C240.7,1.4 248.1,2.0 254.1,2.7C260.1,3.4 264.5,3.9 268.4,5.4C272.3,6.9 275.3,9.1 277.4,11.7C279.5,14.2 279.8,17.6 281.0,20.7C282.2,23.8 282.1,27.2 284.5,30.5C286.9,33.8 292.0,37.3 295.3,40.4C298.6,43.5 304.5,47.7 304.2,49.3C303.9,50.9 297.4,49.9 293.5,50.2C289.6,50.5 284.9,51.2 281.0,51.1C277.1,51.0 273.8,50.3 270.2,49.3C266.6,48.2 262.8,46.3 259.5,44.8C256.2,43.3 253.2,42.2 250.5,40.4C247.8,38.6 245.7,35.9 243.3,34.1C240.9,32.3 239.5,30.4 236.2,29.6C232.9,28.9 227.8,29.9 223.6,29.6C219.4,29.3 215.0,28.7 211.1,27.8C207.2,26.9 204.0,25.7 200.4,24.2C196.8,22.7 193.2,21.3 189.6,18.9C186.0,16.5 179.9,12.9 178.9,9.9Z" fill="#dfe2d6"/>
<path d="M250.5,63.6C249.3,60.7 250.2,55.2 252.3,53.1C254.4,51.0 258.8,51.1 263.0,51.1C267.2,51.1 272.0,52.0 277.4,52.9C282.8,53.8 289.9,55.0 295.3,56.5C300.7,58.0 305.1,59.8 309.6,61.9C314.1,64.0 319.5,66.0 322.2,69.0C324.9,72.0 325.4,76.4 326.0,79.8C326.6,83.2 327.5,87.5 326.0,89.6C324.5,91.7 320.4,92.8 316.8,92.3C313.2,91.8 308.4,88.1 304.2,86.9C300.0,85.7 296.2,86.0 291.7,85.1C287.2,84.2 281.6,82.8 277.4,81.6C273.2,80.4 269.6,79.8 266.6,78.0C263.6,76.2 262.2,73.2 259.5,70.8C256.8,68.4 251.7,66.5 250.5,63.6Z" fill="#dfe2d6"/>
<path d="M1.0,151.4C2.2,149.8 5.1,151.4 8.1,152.3C11.1,153.2 15.6,155.2 18.9,156.8C22.2,158.5 24.5,162.2 27.8,162.2C31.1,162.2 34.7,157.9 38.6,156.8C42.5,155.8 46.9,155.9 51.1,155.9C55.3,155.9 60.3,155.5 63.6,156.8C66.9,158.1 67.8,161.8 70.8,163.9C73.8,166.0 78.8,166.9 81.6,169.3C84.4,171.7 87.2,176.4 87.8,178.3C88.4,180.2 87.9,180.7 85.1,181.0C82.3,181.3 75.0,180.8 70.8,180.1C66.6,179.3 64.3,177.4 60.1,176.5C55.9,175.6 51.1,175.6 45.7,174.7C40.3,173.8 32.3,172.3 27.8,171.1C23.3,169.9 22.5,168.1 18.9,167.5C15.3,166.9 9.3,168.4 6.3,167.5C3.3,166.6 1.9,164.9 1.0,162.2C0.1,159.5 -0.2,153.1 1.0,151.4Z" fill="#dfe2d6"/>
<path d="M75.3,187.2C75.9,186.0 81.1,186.3 85.1,185.4C89.1,184.5 95.6,181.9 99.5,181.9C103.4,181.9 105.4,183.6 108.4,185.4C111.4,187.2 114.1,190.9 117.4,192.6C120.7,194.2 123.6,194.6 128.1,195.3C132.6,196.1 139.4,196.3 144.2,197.1C149.0,197.8 153.4,198.2 156.8,199.8C160.2,201.4 163.6,205.1 164.8,206.9C166.0,208.7 165.8,210.3 163.9,210.5C162.0,210.7 157.4,208.7 153.2,207.8C149.0,206.9 143.7,205.4 138.9,205.1C134.1,204.8 128.7,206.3 124.5,206.0C120.3,205.7 118.0,204.2 113.8,203.3C109.6,202.4 103.4,201.9 99.5,200.7C95.6,199.5 93.5,197.5 90.5,196.2C87.5,194.8 84.1,194.1 81.6,192.6C79.1,191.1 74.7,188.4 75.3,187.2Z" fill="#dfe2d6"/>
<path d="M-2.0,223.9C-0.0,221.5 5.5,221.5 9.9,221.3C14.3,221.2 20.0,222.3 24.2,223.0C28.4,223.7 31.4,225.4 35.0,225.7C38.6,226.0 42.7,224.4 45.7,224.8C48.7,225.2 50.5,226.9 52.9,228.4C55.3,229.9 69.5,232.7 60.3,234.0C51.1,235.3 8.4,237.7 -2.0,236.0C-12.4,234.3 -4.0,226.3 -2.0,223.9Z" fill="#dfe2d6"/>
<path d="M113.8,221.0C116.2,217.8 120.3,217.5 124.5,216.8C128.7,216.1 134.2,216.6 138.9,216.8C143.7,217.0 149.0,218.0 153.0,218.0C157.0,218.0 159.0,217.2 162.7,216.8C166.4,216.5 171.1,215.5 175.3,215.9C179.5,216.3 183.9,217.7 187.8,219.5C191.7,221.3 195.0,224.2 198.6,226.6C202.2,229.0 224.3,232.4 209.5,234.0C194.7,235.6 126.0,238.2 110.0,236.0C94.0,233.8 111.4,224.2 113.8,221.0Z" fill="#dfe2d6"/>
<path d="M144.2,123.6C144.5,122.3 153.1,119.5 157.4,118.3C161.7,117.1 165.7,116.7 169.9,116.5C174.1,116.3 178.5,116.4 182.4,117.4C186.3,118.4 189.6,121.5 193.2,122.7C196.8,123.9 200.6,124.7 203.9,124.5C207.2,124.3 209.6,122.0 212.9,121.8C216.2,121.6 220.5,122.5 223.6,123.6C226.7,124.6 229.6,126.0 231.7,128.1C233.8,130.2 236.2,133.3 236.0,136.0C235.8,138.7 232.9,142.7 230.8,144.2C228.7,145.7 226.6,145.5 223.6,145.1C220.6,144.7 216.5,142.5 212.9,141.6C209.3,140.7 205.8,140.6 202.2,139.8C198.6,139.1 195.3,138.4 191.4,137.1C187.5,135.8 183.1,133.2 178.9,131.7C174.7,130.2 170.2,129.0 166.3,128.1C162.4,127.2 159.3,127.0 155.6,126.3C151.9,125.5 143.9,124.9 144.2,123.6Z" fill="#dfe2d6"/>
<path d="M218.3,212.3C217.7,210.8 224.2,208.2 227.2,206.9C230.2,205.6 233.2,204.2 236.2,204.2C239.2,204.2 241.2,205.6 245.1,206.9C249.0,208.2 255.3,211.1 259.5,212.3C263.7,213.5 267.8,213.3 270.2,214.1C272.6,214.8 275.0,216.1 273.8,216.8C272.6,217.6 267.8,218.4 263.0,218.6C258.2,218.8 250.5,218.1 245.1,217.7C239.7,217.2 235.3,216.8 230.8,215.9C226.3,215.0 218.9,213.8 218.3,212.3Z" fill="#dfe2d6"/>
</g><g filter="url(#b2)">
<path d="M15.3,33.2C16.1,30.1 17.9,31.5 19.9,32.1C21.9,32.7 24.3,35.0 27.1,36.8C29.9,38.6 33.6,41.5 36.5,42.7C39.5,44.0 42.0,43.3 44.8,44.1C47.6,44.9 50.9,45.9 53.1,47.4C55.3,49.0 56.6,51.5 57.8,53.4C59.0,55.2 59.0,57.7 60.2,58.7C61.4,59.7 63.9,58.8 64.9,59.3C65.9,59.8 66.7,60.9 66.1,61.6C65.5,62.3 63.1,63.4 61.4,63.4C59.6,63.4 57.3,61.3 55.5,61.6C53.7,61.9 52.5,64.5 50.7,65.2C49.0,65.9 46.8,66.4 44.8,65.8C42.8,65.2 40.3,62.7 38.9,61.6C37.5,60.5 38.1,59.8 36.5,59.3C35.0,58.8 31.4,59.4 29.4,58.7C27.4,58.0 26.5,55.8 24.7,55.1C23.0,54.4 20.4,55.2 18.8,54.5C17.2,53.9 15.9,54.5 15.3,51.0C14.7,47.4 14.5,36.4 15.3,33.2Z" fill="#a3bacd" opacity="0.75"/>
<path d="M92.6,73.7C94.6,73.5 97.3,74.1 99.3,74.8C101.3,75.6 103.3,77.1 104.8,78.2C106.4,79.3 108.9,80.7 108.7,81.5C108.5,82.4 105.7,83.2 103.7,83.1C101.8,83.0 99.1,81.8 97.1,81.0C95.0,80.1 93.1,79.0 91.5,78.2C89.9,77.3 87.5,76.7 87.7,75.9C87.8,75.2 90.7,73.9 92.6,73.7Z" fill="#a3bacd" opacity="0.75"/>
<path d="M188.1,6.5C187.2,3.8 188.1,-0.2 192.2,-1.7C196.4,-3.3 205.4,-2.7 213.1,-2.7C220.7,-2.7 230.6,-2.2 238.1,-1.7C245.6,-1.3 252.5,-0.8 258.1,-0.2C263.6,0.5 267.8,0.9 271.4,2.3C275.0,3.7 277.8,5.8 279.7,8.2C281.7,10.6 282.0,13.7 283.1,16.6C284.2,19.5 284.1,22.6 286.3,25.7C288.6,28.7 293.3,32.0 296.4,34.9C299.4,37.8 304.9,41.7 304.7,43.2C304.4,44.7 298.3,43.7 294.7,44.0C291.1,44.3 286.7,45.0 283.1,44.8C279.5,44.7 276.4,44.1 273.0,43.2C269.7,42.2 266.1,40.4 263.1,39.0C260.0,37.6 257.2,36.6 254.7,34.9C252.2,33.2 250.2,30.7 248.0,29.0C245.8,27.4 244.5,25.5 241.4,24.8C238.4,24.2 233.6,25.1 229.7,24.8C225.8,24.6 221.7,24.0 218.1,23.2C214.5,22.3 211.5,21.2 208.1,19.8C204.8,18.4 201.4,17.1 198.1,14.9C194.8,12.7 189.1,9.3 188.1,6.5Z" fill="#6f93b3" opacity="0.93"/>
<path d="M257.6,60.2C256.5,57.5 257.3,52.5 259.3,50.6C261.2,48.7 265.2,48.8 269.1,48.7C272.9,48.7 277.4,49.6 282.3,50.4C287.3,51.2 293.9,52.3 298.8,53.7C303.8,55.1 307.8,56.7 312.0,58.7C316.1,60.6 321.0,62.5 323.6,65.2C326.1,67.9 326.5,72.0 327.1,75.1C327.6,78.3 328.5,82.2 327.1,84.2C325.6,86.1 321.9,87.0 318.6,86.6C315.3,86.2 310.9,82.8 307.0,81.7C303.2,80.6 299.6,80.8 295.5,80.0C291.4,79.2 286.2,77.9 282.3,76.8C278.5,75.7 275.2,75.1 272.4,73.5C269.7,71.8 268.3,69.1 265.9,66.9C263.4,64.6 258.7,62.9 257.6,60.2Z" fill="#6f93b3" opacity="0.93"/>
<path d="M8.3,156.4C9.3,155.0 11.9,156.4 14.4,157.2C17.0,158.0 20.9,159.6 23.7,161.1C26.5,162.5 28.5,165.7 31.4,165.7C34.2,165.7 37.3,162.0 40.6,161.1C44.0,160.2 47.8,160.3 51.4,160.3C55.0,160.3 59.3,159.9 62.1,161.1C65.0,162.2 65.8,165.4 68.3,167.2C70.9,169.0 75.2,169.7 77.6,171.8C80.1,173.9 82.5,177.9 83.0,179.5C83.5,181.2 83.1,181.6 80.6,181.9C78.2,182.1 71.9,181.7 68.3,181.1C64.8,180.5 62.7,178.8 59.1,178.0C55.5,177.2 51.4,177.2 46.8,176.5C42.1,175.7 35.2,174.4 31.4,173.4C27.5,172.3 26.8,170.8 23.7,170.3C20.6,169.7 15.4,171.0 12.9,170.3C10.3,169.5 9.1,168.0 8.3,165.7C7.6,163.4 7.3,157.8 8.3,156.4Z" fill="#7a9cb8" opacity="0.9"/>
<path d="M83.1,191.4C83.6,190.4 88.1,190.6 91.5,189.9C95.0,189.1 100.6,186.9 103.9,186.9C107.3,186.9 109.0,188.3 111.6,189.9C114.1,191.4 116.5,194.6 119.3,196.1C122.1,197.5 124.7,197.7 128.5,198.4C132.4,199.0 138.2,199.3 142.4,199.9C146.5,200.6 150.2,200.8 153.2,202.2C156.1,203.7 159.1,206.8 160.1,208.4C161.1,209.9 161.0,211.3 159.3,211.4C157.6,211.6 153.7,209.9 150.1,209.1C146.5,208.4 141.9,207.1 137.8,206.8C133.7,206.5 129.0,207.8 125.4,207.6C121.8,207.3 119.8,206.0 116.2,205.3C112.6,204.5 107.3,204.0 103.9,203.0C100.6,202.0 98.7,200.3 96.2,199.2C93.6,198.0 90.7,197.3 88.5,196.1C86.3,194.8 82.6,192.4 83.1,191.4Z" fill="#7a9cb8" opacity="0.9"/>
<path d="M0.4,227.4C2.2,225.1 7.3,225.1 11.3,225.0C15.4,224.8 20.7,225.9 24.5,226.5C28.4,227.2 31.1,228.7 34.4,229.0C37.7,229.3 41.5,227.8 44.3,228.2C47.0,228.6 48.7,230.1 50.9,231.5C53.1,232.9 66.1,235.5 57.7,236.7C49.3,237.8 10.0,240.0 0.4,238.5C-9.2,236.9 -1.4,229.6 0.4,227.4Z" fill="#7a9cb8" opacity="0.9"/>
<path d="M117.3,224.7C119.5,221.7 123.3,221.5 127.1,220.8C131.0,220.2 136.0,220.6 140.4,220.8C144.8,221.0 149.7,221.9 153.4,221.9C157.0,221.9 158.9,221.1 162.3,220.8C165.7,220.5 170.0,219.6 173.9,220.0C177.7,220.4 181.8,221.7 185.4,223.3C188.9,225.0 192.0,227.6 195.3,229.8C198.6,232.1 218.9,235.2 205.3,236.7C191.7,238.1 128.5,240.5 113.8,238.5C99.1,236.5 115.1,227.6 117.3,224.7Z" fill="#7a9cb8" opacity="0.9"/>
<path d="M153.4,127.8C153.6,126.6 161.0,124.2 164.7,123.2C168.4,122.2 171.9,121.8 175.5,121.7C179.1,121.6 182.9,121.6 186.2,122.5C189.6,123.3 192.4,126.0 195.5,127.0C198.6,128.0 201.9,128.7 204.7,128.6C207.5,128.4 209.6,126.4 212.4,126.2C215.3,126.1 219.0,126.9 221.6,127.8C224.3,128.7 226.8,129.9 228.6,131.7C230.4,133.4 232.4,136.1 232.3,138.5C232.2,140.8 229.6,144.2 227.8,145.5C226.1,146.8 224.2,146.7 221.6,146.3C219.1,145.9 215.5,144.0 212.4,143.3C209.4,142.5 206.3,142.4 203.2,141.7C200.2,141.1 197.3,140.6 194.0,139.4C190.6,138.2 186.8,136.0 183.2,134.8C179.6,133.5 175.7,132.4 172.4,131.7C169.0,130.9 166.3,130.8 163.2,130.1C160.0,129.5 153.1,128.9 153.4,127.8Z" fill="#7a9cb8" opacity="0.9"/>
<path d="M224.0,214.4C223.5,213.2 228.8,211.1 231.1,210.0C233.5,209.0 236.0,207.9 238.3,207.9C240.7,207.9 242.4,209.0 245.5,210.0C248.6,211.1 253.6,213.4 257.0,214.4C260.3,215.3 263.6,215.2 265.5,215.8C267.5,216.4 269.4,217.4 268.4,218.0C267.5,218.6 263.6,219.3 259.8,219.4C256.0,219.5 249.8,219.0 245.5,218.7C241.2,218.3 237.6,218.0 234.0,217.2C230.5,216.5 224.5,215.6 224.0,214.4Z" fill="#7a9cb8" opacity="0.9"/>
</g>
<circle cx="126.7" cy="21.2" r="16.6" fill="#fffbdc"/>
<g id="girl">
<!-- legs -->
<path d="M238.9,163 L250.9,163 L251.9,200.5 L243.6,200.5 Q241.5,182 238.9,163Z" fill="#f8e4dc"/>
<path d="M251.6,164 L264.6,164 Q262.5,184 260.4,204 L252.9,204 Z" fill="#f8e4dc"/>
<path d="M251.2,166 L251.9,200" stroke="#6a4a48" stroke-width=".5" fill="none"/>
<path d="M246,188 q2,3 4,0 M255,190 q2,3 4,0" stroke="#f2c8c0" stroke-width="1.2" fill="none"/>
<!-- socks -->
<path d="M243.4,200 L252.3,199.5 L253,204 L260.6,203.5 L258.6,222 L257.8,231 L247.5,231 L247,222 Z" fill="#141b38"/>
<path d="M247.5,226 L257.6,224.5 L258,232 L247.3,232Z" fill="#2b2b30"/>
<!-- arms back hands -->
<path d="M230.3,156.5 q-1.2,5 0.6,11 l2.2,-1 q1.8,-5 1.2,-10Z" fill="#ece6e2" stroke="#555" stroke-width=".4"/>
<path d="M268.2,155.5 q0.2,7 2.6,14.2 l2,-0.6 q0.3,-7 -1.2,-13.6Z" fill="#b9b0a8" stroke="#555" stroke-width=".4"/>
<!-- skirt -->
<path d="M240,140 L262.2,140 L268.4,165.6 Q252,168.6 235.2,164.6 Z" fill="#10162f"/>
<path d="M242,164 l2,-20 M247,165.6 l1,-22 M252,166 l0,-22 M257,166 l-1,-22 M262,165.5 l-2.6,-22" stroke="#1f2848" stroke-width=".5"/>
<!-- torso + arms -->
<path d="M235.6,112.5 Q243,107 250.6,106.5 Q258,107 266.2,112.5 L269.8,135 L272.8,154.3 L267.9,155.5 L262.6,134 L262.3,142 L239.6,142 L239.4,134 L235.3,156 L230.4,155 L232.4,135 Z" fill="#151c3a"/>
<path d="M230.3,154.2 L235.4,155.4 M267.8,154.6 L272.9,153.4" stroke="#e8e8f0" stroke-width="1.1"/>
<!-- hair -->
<path d="M246,96 L255.2,96 L257,110 L244.200,110Z" fill="#8a5630"/>
<path d="M250.6,75.6 Q243.6,76 240.5,83 Q237.4,91 236.6,101 Q236.5,108 238,111 Q236,115 234.4,120 L236.8,120.6 Q239.5,114 243,110 Q247,106.5 248.4,103 Q249.4,97 250.6,92.5 Q251.8,97 252.8,103 Q254.2,106.5 258.2,110 Q261.7,114 264.9,120.6 L267.6,120 Q266,115 263.9,111 Q265.5,108 265.3,101 Q264.5,91 261.4,83 Q258,76 250.6,75.6Z" fill="#c98950" stroke="#5a3818" stroke-width=".5"/>
<path d="M241,84 Q250.6,80.5 260.6,84" stroke="#e2b080" stroke-width="1" fill="none" opacity=".8"/>
<path d="M248.6,103 Q250.6,92 252.6,103" fill="#9a6238" opacity=".7"/>
<!-- collar -->
<path d="M241.4,110.4 L243,116.4 L258.4,116.4 L260,110.4" stroke="#dfe2ee" stroke-width=".9" fill="none"/>
<path d="M249,116.4 L252.4,116.4 L250.7,118.6Z" fill="#e02020"/>
<!-- ties -->
<ellipse cx="233.3" cy="113.8" rx="2.6" ry="1.5" fill="#8a58c8"/>
<ellipse cx="268.8" cy="113.8" rx="2.6" ry="1.5" fill="#8a58c8"/>
</g>

</svg>
<div class="a" style="left:511px;top:422px;width:327px;height:234px;border:1px solid #000;box-shadow:inset 0 0 0 1px #7a7a7a;background:#fff"></div>
<svg class="a" style="left:470px;top:130px" width="410" height="574" viewBox="470 130 410 574" shape-rendering="crispEdges" fill="none">
<rect x="475.5" y="135.5" width="397" height="561" stroke="#008000" stroke-width="1" stroke-dasharray="1 1"/>
<rect x="504.5" y="169.5" width="340" height="493" stroke="#0000ff" stroke-width="1"/>
<path d="M510,176.5H838 M510,656.5H838" stroke="#ff0000" stroke-width="1" stroke-dasharray="3 1"/>
<path d="M510.5,176V657 M837.5,411V422" stroke="#ff0000" stroke-width="1" stroke-dasharray="3 1"/>
<!-- selection -->
<path d="M514,147H839 M514,477H839" stroke="#0000ff" stroke-width="2" stroke-dasharray="2 2"/>
<path d="M512,149V474" stroke="#fff" stroke-width="2"/>
<path d="M512,149V474 M841,149V474" stroke="#0000ff" stroke-width="2" stroke-dasharray="2 2"/>
<g stroke="#0000ff" stroke-width="2">
<rect x="501" y="136" width="12" height="12" fill="#fff"/>
<rect x="840" y="136" width="12" height="12" fill="#fff"/>
<rect x="501" y="475" width="12" height="12"/>
<rect x="840" y="475" width="12" height="12"/>
<path d="M677,137V146 M502,312H513 M840,312H852 M677,478V487"/>
</g>
<g stroke="#0000ff" stroke-width="2" shape-rendering="auto">
<circle cx="677.5" cy="130.5" r="5.6" fill="#fff"/>
<circle cx="495.5" cy="312.5" r="5.6" fill="#fff"/>
<circle cx="858.5" cy="312.5" r="5.6" fill="#fff"/>
<circle cx="677.5" cy="493" r="5.6" fill="#fff"/>
</g>
</svg>

<div id="vscroll" class="a">
<svg class="a" style="left:4px;top:4px" width="9" height="6"><path d="M1,5 L4.500,1.500 L8,5Z" fill="#555" stroke="#222" stroke-width=".9"/></svg>
<div class="a" style="left:2px;top:19px;width:12px;height:533px;border:1px solid #909090;border-radius:3px;background:linear-gradient(90deg,#ececec,#e0e0e0 45%,#cbcbcb 55%,#d0d0d0);box-shadow:inset 0 0 0 1px #f6f6f6"></div>
<svg class="a" style="left:7px;top:281px" width="3" height="7"><path d="M0,.5H3M0,2.500H3M0,4.500H3M0,6.500H3" stroke="#555" stroke-width="1"/></svg>
<svg class="a" style="left:4px;top:562px" width="9" height="6"><path d="M1,1 L4.500,4.500 L8,1Z" fill="#444" stroke="#222" stroke-width=".9"/></svg>
</div>
<div id="rsep" class="a"></div>
<div id="right" class="a">
<!-- right panel: local x = page x - 1203, local y = page y - 43 -->
<div class="a ghead" style="left:0;top:0;width:163px"><span style="padding-left:7px">Layer Properties</span></div>
<div class="a" style="left:6px;top:23px;width:150px;height:22px;background:#fff;border:1px solid #9a9a9a;box-shadow:inset 0 0 0 1px #f0f0f0;font-size:13px;line-height:19px;padding-left:3px;letter-spacing:.25px;color:#111">Night Sky_06</div>
<span class="a sm" style="left:5px;top:55px;font-size:9.7px">Stroke Width</span>
<span class="a sm" style="left:5px;top:76px;font-size:9.2px">Transparency</span>
<span class="a sm" style="left:110px;top:54px;font-size:8.7px;letter-spacing:0">Color</span>
<div class="a spin" style="left:66px;top:49px"><span>0</span><i class="u"></i><i class="d"></i></div>
<div class="a spin" style="left:66px;top:71px"><span>0</span><i class="u"></i><i class="d"></i></div>
<div class="a" style="left:132px;top:50px;width:18px;height:18px;border:2px solid #8a8a8a;background:#fffff0"></div>
<!-- icons row -->
<svg class="a" style="left:0;top:115px" width="163" height="36" viewBox="1203 158 163 36">
<defs><linearGradient id="rb" x1="0" y1="0" x2="1" y2="0"><stop offset="0" stop-color="#ff8080"/><stop offset=".2" stop-color="#ffd080"/><stop offset=".4" stop-color="#ffff80"/><stop offset=".6" stop-color="#80ff90"/><stop offset=".8" stop-color="#80d0ff"/><stop offset="1" stop-color="#c080ff"/></linearGradient>
<pattern id="chk" x="1268" y="166" width="5.200" height="5.200" patternUnits="userSpaceOnUse"><rect width="5.200" height="5.200" fill="#fff"/><rect width="2.600" height="2.600" fill="#b4b4b4"/><rect x="2.600" y="2.600" width="2.600" height="2.600" fill="#b4b4b4"/></pattern>
<filter id="ds2" x="-10%" y="-10%" width="130%" height="130%"><feDropShadow dx="1" dy="1" stdDeviation=".45" flood-color="#000" flood-opacity=".18"/></filter></defs>
<rect x="1208.500" y="162.500" width="22" height="22" rx="3.500" fill="#ffc20a" stroke="#b9a878"/>
<path d="M1211,174.500 Q1219.500,166 1228.500,172.500 Q1224,182.500 1213,178.500Z" fill="#fff"/>
<path d="M1211,174.500 Q1219.500,166.500 1228.500,172.500" fill="none" stroke="#000" stroke-width="2"/>
<path d="M1212.500,178 Q1220,182.500 1226.500,176.500" fill="none" stroke="#555" stroke-width=".8"/>
<circle cx="1219.500" cy="174.800" r="3.800" fill="#9a9a9a" stroke="#333" stroke-width=".8"/><circle cx="1219.500" cy="174.800" r="1.700" fill="#111"/><circle cx="1218" cy="173.300" r=".9" fill="#fff"/>
<g filter="url(#ds2)">
<rect x="1243.500" y="165.500" width="12.500" height="11" rx="2.500" fill="#fff" stroke="#d8d8d0" stroke-width="1"/><rect x="1237.700" y="168.700" width="14" height="13" fill="#fff" stroke="#000" stroke-width="1.400"/><path d="M1241.500,168.700 V173 Q1241.500,175.500 1244,175.500 L1243,178.500 L1246.500,175.500 H1251.700" fill="none" stroke="#000" stroke-width="1"/><rect x="1267.500" y="165.500" width="16.500" height="16.500" fill="url(#chk)" stroke="#000" stroke-width="1.200"/><rect x="1268.0" y="176" width="2.600" height="2.800" fill="#f0f0a0"/><rect x="1268.0" y="178.800" width="2.600" height="2.700" fill="#b080ff"/><rect x="1270.6" y="176" width="2.600" height="2.800" fill="#a0b0ff"/><rect x="1270.6" y="178.800" width="2.600" height="2.700" fill="#e0f080"/><rect x="1273.2" y="176" width="2.600" height="2.800" fill="#ffe0a0"/><rect x="1273.2" y="178.800" width="2.600" height="2.700" fill="#ff70d0"/><rect x="1275.8" y="176" width="2.600" height="2.800" fill="#a0f0ff"/><rect x="1275.8" y="178.800" width="2.600" height="2.700" fill="#90f090"/><rect x="1278.4" y="176" width="2.600" height="2.800" fill="#ffb0d8"/><rect x="1278.4" y="178.800" width="2.600" height="2.700" fill="#ff7070"/><rect x="1281.0" y="176" width="2.600" height="2.800" fill="#d0a0ff"/><rect x="1281.0" y="178.800" width="2.600" height="2.700" fill="#80c0ff"/><rect x="1267.500" y="165.500" width="16.500" height="16.500" fill="none" stroke="#000" stroke-width="1.200"/><rect x="1294.00" y="166" width="2.31" height="15.500" fill="#ff5a6a"/><rect x="1296.21" y="166" width="2.31" height="15.500" fill="#ffb070"/><rect x="1298.43" y="166" width="2.31" height="15.500" fill="#ffff70"/><rect x="1300.64" y="166" width="2.31" height="15.500" fill="#90ff70"/><rect x="1302.86" y="166" width="2.31" height="15.500" fill="#60e8ff"/><rect x="1305.07" y="166" width="2.31" height="15.500" fill="#8090ff"/><rect x="1307.29" y="166" width="2.31" height="15.500" fill="#ff60f0"/><rect x="1293.500" y="165.500" width="16.500" height="16.500" fill="none" stroke="#000" stroke-width="1.200"/>
<path transform="translate(1344,167.200)" d="M0,0 H10 Q11.5,0 11.5,1.500 V7.300 H8.400 L11.900,10.200 L8.500,11.900 L6.400,7.300 H2.400 V12 H0Z M2.400,3.500 V5.600 H9.100 V3.500Z" fill="#000" fill-rule="evenodd"/>
</g>
<path d="M1260.500,161V186" stroke="#e2e0c4"/>
<path d="M1209,190.500H1360" stroke="#deddc4"/>
</svg>
<!-- layer list -->
<div class="a" style="left:0;top:279px;width:163px;height:1px;background:#666"></div>
<div class="a ghead" style="left:0;top:280px;width:163px"><span style="padding-left:7px">Layer List</span></div>
<svg class="a" style="left:0;top:303px" width="163" height="28" viewBox="1203 346 163 28">
<g filter="url(#ds2)">
<path d="M1216.300,352.500 h4.400 v5 h3 l-5.200,5 l-5.200,-5 h3Z" fill="#000"/><path d="M1213,364.500h11" stroke="#000" stroke-width="1.500"/>
<path d="M1242.800,353 h4.400 v5 h3 l-5.200,5.500 l-5.200,-5.500 h3Z" fill="#fff" stroke="#000" stroke-width="1.100" stroke-linejoin="round"/>
</g>
<path d="M1268.300,364 h4.400 v-5 h2.600 l-4.800,-5.500 l-4.800,5.500 h2.600Z" fill="#fbfbf0" stroke="#d4d4c4" stroke-width="1" stroke-linejoin="round"/>
<path d="M1294.300,365 h4.400 v-4.500 h3 l-5.200,-5 l-5.200,5 h3Z" fill="#cfcfc0"/><path d="M1291,352.500h11" stroke="#cfcfc0" stroke-width="1.300"/>
<g filter="url(#ds2)" transform="translate(1341,349.300)"><path d="M1.500,5 H13.500 L12.200,16 Q12,17 11,17 H4 Q3,17 2.800,16Z" fill="#fff" stroke="#000" stroke-width="1.300"/><path d="M0.500,3 Q7.500,0.500 14.500,3 V4.800 H0.500Z" fill="#fff" stroke="#000" stroke-width="1.100"/><path d="M6,1.500 Q7.500,-0.500 9,1.500" fill="none" stroke="#000" stroke-width="1.100"/><path d="M5.500,7.500 L6,14 M9.500,7.500 L9,14" stroke="#777" stroke-width="1.300"/></g>
</svg>
<!-- tree -->
<div class="a" style="left:1px;top:333px;width:145px;height:1px;background:#9c9c9c"></div>
<div class="a" style="left:1px;top:334px;width:145px;height:23px;background:#ffffc0"></div>
<div class="a" style="left:1px;top:357px;width:145px;height:1px;background:#b4b4b4"></div>
<div class="a" style="left:1px;top:358px;width:13px;height:47px;background:#ffffe4;border-right:1px solid #b8b8a0"></div>
<div class="a" style="left:14px;top:358px;width:132px;height:24px;background:#fdb827"></div>
<div class="a" style="left:14px;top:382px;width:132px;height:23px;background:#fff"></div>
<div class="a" style="left:1px;top:405px;width:145px;height:1px;background:#b4b4b4"></div>
<div class="a" style="left:1px;top:406px;width:145px;height:23px;background:#fff;border-left:1px solid #aaa"></div>
<span class="a tl" style="left:40px;top:337px">Panel 1</span>
<span class="a tl" style="left:54px;top:361px">Night Sky_06</span>
<span class="a tl" style="left:54px;top:385px">Fem1</span>
<span class="a tl" style="left:40px;top:409px">Panel 2</span>
<svg class="a" style="left:0;top:334px" width="60" height="96" viewBox="1203 377 60 96">
<path d="M1206.500,385 h8.500 l-4.250,5.500Z" fill="#222"/>
<g id="pic">
<rect x="1220.500" y="379.500" width="17" height="17" fill="#fff" stroke="#000" stroke-width="1.200"/>
<circle cx="1226.500" cy="389.500" r="4.300" fill="#fff" stroke="#666" stroke-width=".9"/><path d="M1222.500,388 q1,-4.500 6,-4" fill="none" stroke="#666" stroke-width=".9"/><path d="M1225,389v1M1228,389v1" stroke="#444" stroke-width=".9"/><path d="M1224.800,391.500 q1.700,1.300 3.400,0" stroke="#666" stroke-width=".7" fill="none"/><path d="M1221.500,396 q2,-2.500 5,-2 q3,-.5 5,2" fill="none" stroke="#666" stroke-width=".9"/>
<path d="M1232,381.500 h4 v7 l-2.500,3 l.5,-3 h-2" fill="#fff" stroke="#666" stroke-width=".8"/><path d="M1234,383v.1M1234,385.500v.1" stroke="#666" stroke-width="1"/>
</g>
<use href="#pic" y="70"/>
<rect x="1234.500" y="403.500" width="17" height="17" fill="#fff" stroke="#000" stroke-width="1.200"/>
<path d="M1243,406 l4,3.500 h-8Z M1240,409.500h6v3h-6Z M1237,412.500h12v2h-12Z M1237.500,414.500h11v4h-11Z" fill="#e8e8e8" stroke="#555" stroke-width=".7"/><path d="M1236,407v.1M1238,405.500v.1M1237,409v.1" stroke="#777" stroke-width=".9"/><path d="M1239.500,416.500h7" stroke="#555" stroke-width="1.500" stroke-dasharray="1 1"/>
<circle cx="1243.500" cy="429.500" r="2.600" fill="#fff" stroke="#000" stroke-width="1"/>
<path d="M1243.500,432 q-3,1 -4,5.500 l-1.500,2.500 M1243.500,432 q3,1 4.500,4.500 l1.500,1 M1241.500,434 v5 l-2.500,5 h3 M1245.500,434 v5 l1.500,5.500 h-3 l-1,-4" fill="none" stroke="#000" stroke-width="1"/>
</svg>
<!-- right scrollbar -->
<div class="a" style="left:147px;top:334px;width:15px;height:327px;border-left:1px solid #f4f4e8;background:linear-gradient(90deg,#bdbdbd,#dadada 45%,#d6d6d6 60%,#c2c2c2)">
<svg class="a" style="left:2px;top:4px" width="9" height="6"><path d="M1,5 L4.500,1.500 L8,5Z" fill="#555" stroke="#222" stroke-width=".9"/></svg>
<svg class="a" style="left:2px;top:315px" width="9" height="6"><path d="M1,1 L4.500,4.500 L8,1Z" fill="#444" stroke="#222" stroke-width=".9"/></svg>
</div>

</div>

<div id="status" class="a"><span style="left:2px">Night Sky_06</span><span style="left:829px">5, -79</span><span style="left:949px">886 x 886</span><span style="left:1069px">0.00 degree</span><div class="a" style="left:1187px;top:1px;width:179px;height:21px;border:1px solid #a8a8a8;border-right:0;background:linear-gradient(#fff,#f2f2f2)"></div></div>
</div>
</body>
</html>
